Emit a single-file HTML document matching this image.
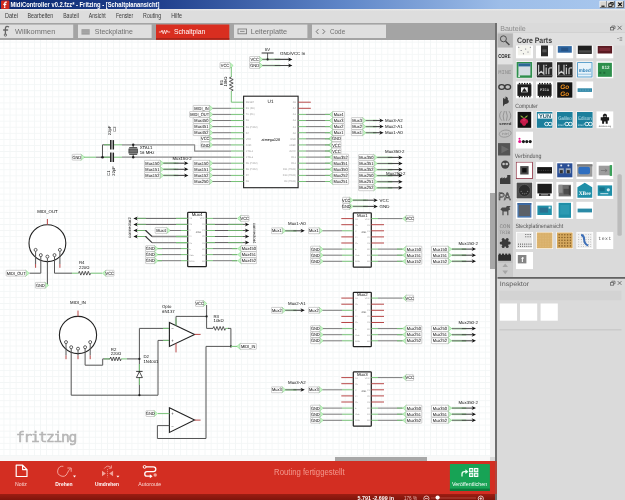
<!DOCTYPE html><html><head><meta charset="utf-8"><title>Fritzing</title><style>
*{margin:0;padding:0;box-sizing:border-box}
html,body{width:625px;height:500px;overflow:hidden;background:#dadada;font-family:"Liberation Sans",sans-serif}
.a{position:absolute}
svg.a{will-change:transform}
#title{left:0;top:0;width:625px;height:8.8px;background:linear-gradient(90deg,#0b2a72 0%,#1f3f8c 25%,#5f86c8 55%,#9dbde8 80%,#a9c8ee 100%)}
#title span{position:absolute;left:10.5px;top:0.5px;font-size:7px;line-height:8px;font-weight:bold;color:#fff;white-space:nowrap;letter-spacing:-0.05px}
#menu{left:0;top:8.8px;width:625px;height:15.2px;background:linear-gradient(180deg,#ececec 0,#e4e4e4 1.2px,#dddddd 2px)}
#menu span{position:absolute;top:3.2px;font-size:6.3px;line-height:8px;color:#333;white-space:nowrap}
#tabs{left:0;top:23.4px;width:495.2px;height:16.3px;background:#a4a4a4}
.tab{position:absolute;top:1.6px;height:13.6px;background:#dfdfdf;font-size:8.3px;line-height:13.6px;color:#777;white-space:nowrap}
.tab span{position:absolute;top:0}
#canvas{left:0;top:39.7px;width:490.4px;height:421.3px;background-color:#fff;
 background-image:linear-gradient(90deg,#f3f6f6 0,#f3f6f6 0.6px,transparent 0.6px),linear-gradient(180deg,#f3f6f6 0,#f3f6f6 0.6px,transparent 0.6px);
 background-size:6.1px 6.08px;background-position:3.5px 1.7px}
#vsb{left:490.4px;top:39.6px;width:4.8px;height:417px;background:#f1f1f1}
#vth{left:490.2px;top:193.3px;width:5px;height:76px;background:#a8a8a8}
#hsb{left:0;top:456.4px;width:490.4px;height:4.6px;background:#f8f8f8}
#hth{left:334.6px;top:456.6px;width:92px;height:4.4px;background:#a8a8a8}
#divider{left:495.2px;top:23px;width:2.3px;height:477px;background:#6f6f6f}
#tool{left:0;top:461px;width:495.2px;height:33px;background:#d32e22}
#status{left:0;top:494px;width:495.2px;height:6px;background:linear-gradient(180deg,#9c1d12,#7e150c)}
#panel{left:497.5px;top:23px;width:127.5px;height:477px;background:#dadada}
.tile{position:absolute;width:17px;height:17.3px;background:#fff;overflow:hidden}
.tile i{position:absolute;display:block}
.sec{position:absolute;left:514.8px;font-size:6.3px;line-height:8px;color:#555;white-space:nowrap}
.bin{position:absolute;left:497.5px;width:15.4px}
</style></head><body>
<div class="a" id="title"></div><div class="a" id="menu"></div><div class="a" id="tabs"></div>
<svg class="a" style="left:0;top:0" width="625" height="40" viewBox="0 0 625 40" font-family="Liberation Sans, sans-serif"><rect x="1" y="0.6" width="8.4" height="8.4" rx="0.8" fill="#cf2a1e"/><path d="M6.9,2.3 Q4.9,1.5 4.7,3.6 V6.6 M3.3,4.3 H6.3" fill="none" stroke="#fff" stroke-width="1.2"/><circle cx="4.7" cy="7.3" r="0.8" fill="#fff"/><text x="10.4" y="7.2" font-size="7" fill="#fff" font-weight="bold" textLength="149.0" lengthAdjust="spacingAndGlyphs" >MidiController v0.2.fzz* - Fritzing - [Schaltplanansicht]</text><rect x="599.8" y="1.1" width="6.8" height="6.5" fill="#d8d5d0"/><path d="M599.8,7.6 V1.1 H606.5999999999999" fill="none" stroke="#fff" stroke-width="0.6"/><path d="M606.5999999999999,1.1 V7.6 H599.8" fill="none" stroke="#404040" stroke-width="0.7"/><rect x="607.2" y="1.1" width="7.2" height="6.5" fill="#d8d5d0"/><path d="M607.2,7.6 V1.1 H614.4000000000001" fill="none" stroke="#fff" stroke-width="0.6"/><path d="M614.4000000000001,1.1 V7.6 H607.2" fill="none" stroke="#404040" stroke-width="0.7"/><rect x="616.4" y="1.1" width="7.2" height="6.5" fill="#d8d5d0"/><path d="M616.4,7.6 V1.1 H623.6" fill="none" stroke="#fff" stroke-width="0.6"/><path d="M623.6,1.1 V7.6 H616.4" fill="none" stroke="#404040" stroke-width="0.7"/><path d="M601.4,6.2 H604.6" stroke="#000" stroke-width="1.1"/><rect x="608.8" y="3.8" width="3.2" height="2.6" fill="none" stroke="#000" stroke-width="0.8"/><path d="M610.2,3.6 V2.5 H613.2 V5 H612.2" fill="none" stroke="#000" stroke-width="0.8"/><path d="M618.2,2.6 L621.8,6.2 M621.8,2.6 L618.2,6.2" stroke="#000" stroke-width="1.1"/><text x="5.1" y="18.2" font-size="6.4" fill="#3a3a3a" font-weight="normal" textLength="12.8" lengthAdjust="spacingAndGlyphs" >Datei</text><text x="27.6" y="18.2" font-size="6.4" fill="#3a3a3a" font-weight="normal" textLength="25.6" lengthAdjust="spacingAndGlyphs" >Bearbeiten</text><text x="63.2" y="18.2" font-size="6.4" fill="#3a3a3a" font-weight="normal" textLength="15.7" lengthAdjust="spacingAndGlyphs" >Bauteil</text><text x="88.8" y="18.2" font-size="6.4" fill="#3a3a3a" font-weight="normal" textLength="16.9" lengthAdjust="spacingAndGlyphs" >Ansicht</text><text x="116" y="18.2" font-size="6.4" fill="#3a3a3a" font-weight="normal" textLength="17.1" lengthAdjust="spacingAndGlyphs" >Fenster</text><text x="143.1" y="18.2" font-size="6.4" fill="#3a3a3a" font-weight="normal" textLength="18.1" lengthAdjust="spacingAndGlyphs" >Routing</text><text x="171.2" y="18.2" font-size="6.4" fill="#3a3a3a" font-weight="normal" textLength="10.8" lengthAdjust="spacingAndGlyphs" >Hilfe</text><rect x="0" y="24.6" width="73.2" height="13.4" fill="#dfdfdf"/><rect x="78" y="24.6" width="73.6" height="13.4" fill="#dfdfdf"/><rect x="156" y="24.5" width="73.3" height="15.2" fill="#d92e20"/><rect x="156" y="38" width="73.3" height="1.7" fill="#a9241a"/><rect x="234" y="24.6" width="73.4" height="13.4" fill="#dfdfdf"/><rect x="312" y="24.6" width="74.0" height="13.4" fill="#dfdfdf"/><path d="M8.6,26.8 C6.6,25.8 5.4,26.8 5.4,28.6 V34 M3.6,30 H7.6" fill="none" stroke="#666" stroke-width="1.3" stroke-linecap="round"/><circle cx="5.4" cy="35" r="1.2" fill="none" stroke="#666" stroke-width="0.9"/><text x="14.9" y="34" font-size="7.3" fill="#707070" font-weight="normal" textLength="40.4" lengthAdjust="spacingAndGlyphs" >Willkommen</text><rect x="81.5" y="29.2" width="8.2" height="5.4" fill="#9a9a9a"/><path d="M81.5,31H89.7M81.5,32.8H89.7" stroke="#bdbdbd" stroke-width="0.5"/><text x="94.8" y="34" font-size="7.3" fill="#707070" font-weight="normal" textLength="38.0" lengthAdjust="spacingAndGlyphs" >Steckplatine</text><path d="M158.9,32 H161.3 L162,30.2 L163.2,33.8 L164.4,30.2 L165.6,33.8 L166.8,30.2 L167.6,32 H170.2" fill="none" stroke="#fff" stroke-width="0.7"/><text x="173.9" y="34" font-size="7.3" fill="#fff" font-weight="normal" textLength="31.4" lengthAdjust="spacingAndGlyphs" >Schaltplan</text><rect x="238" y="29" width="8.6" height="4.8" fill="none" stroke="#777" stroke-width="0.8"/><path d="M240,31.4H244.6" stroke="#777" stroke-width="0.8"/><text x="250.8" y="34" font-size="7.3" fill="#707070" font-weight="normal" textLength="36.4" lengthAdjust="spacingAndGlyphs" >Leiterplatte</text><path d="M318.4,29.2 L316.2,31.6 L318.4,34 M322.6,29.2 L324.8,31.6 L322.6,34" fill="none" stroke="#666" stroke-width="0.9"/><text x="330" y="34" font-size="7.3" fill="#707070" font-weight="normal" textLength="15.2" lengthAdjust="spacingAndGlyphs" >Code</text></svg>
<div class="a" id="canvas"></div><div class="a" id="vsb"></div><div class="a" id="vth"></div><div class="a" id="hsb"></div><div class="a" id="hth"></div>
<div class="a" style="left:16.2px;top:427.6px;font-family:'DejaVu Sans Mono',monospace;font-size:14.6px;line-height:18px;color:#b6b6b6;letter-spacing:-1.3px;white-space:nowrap;font-weight:normal;-webkit-text-stroke:0.55px #b6b6b6;will-change:transform">fritzing</div>
<svg class="a" style="left:0;top:0" width="625" height="500" viewBox="0 0 625 500" font-family="Liberation Sans, sans-serif" text-rendering="geometricPrecision"><defs><clipPath id="cv"><rect x="0" y="39.6" width="490.4" height="417"/></clipPath></defs><g clip-path="url(#cv)" stroke-linecap="butt">
<path d="M259.1,56.2 L262.8,59.4 L259.1,62.6 Z" fill="#c4f4c4" stroke="#8be08b" stroke-width="0.6" stroke-linejoin="round"/>
<rect x="249.6" y="56.5" width="10.0" height="5.8" rx="0.5" fill="#fff" stroke="#a0a0a0" stroke-width="0.5"/>
<text transform="translate(254.6,60.9) scale(0.88,1)" font-size="4.5" text-anchor="middle" fill="#000">VCC</text>
<path d="M259.1,62.3 L262.8,65.5 L259.1,68.7 Z" fill="#c4f4c4" stroke="#8be08b" stroke-width="0.6" stroke-linejoin="round"/>
<rect x="249.6" y="62.6" width="10.0" height="5.8" rx="0.5" fill="#fff" stroke="#a0a0a0" stroke-width="0.5"/>
<text transform="translate(254.6,67.0) scale(0.88,1)" font-size="4.5" text-anchor="middle" fill="#000">GND</text>
<line x1="262.0" y1="59.4" x2="275.0" y2="59.4" stroke="#78c278" stroke-width="1.0" />
<line x1="262.0" y1="65.5" x2="275.0" y2="65.5" stroke="#78c278" stroke-width="1.0" />
<line x1="262.5" y1="59.4" x2="280.4" y2="59.4" stroke="#9be09b" stroke-width="2.0" opacity="0.5"/>
<line x1="262.5" y1="59.4" x2="274.5" y2="59.4" stroke="#747474" stroke-width="1.0" />
<line x1="274.5" y1="59.4" x2="290.4" y2="59.4" stroke="#484848" stroke-width="1.1" />
<path d="M292.4,59.4 L288.0,57.4 L289.4,59.4 L288.0,61.4 Z" fill="#111"/>
<line x1="262.5" y1="65.5" x2="280.4" y2="65.5" stroke="#9be09b" stroke-width="2.0" opacity="0.5"/>
<line x1="262.5" y1="65.5" x2="274.5" y2="65.5" stroke="#747474" stroke-width="1.0" />
<line x1="274.5" y1="65.5" x2="290.4" y2="65.5" stroke="#484848" stroke-width="1.1" />
<path d="M292.4,65.5 L288.0,63.5 L289.4,65.5 L288.0,67.5 Z" fill="#111"/>
<line x1="261.6" y1="53.0" x2="273.6" y2="53.0" stroke="#333" stroke-width="1.0" />
<line x1="267.6" y1="53.0" x2="267.6" y2="59.4" stroke="#333" stroke-width="0.8" />
<circle cx="267.6" cy="59.4" r="1.1" fill="#222"/>
<text x="267.6" y="51.2" font-size="4.3" text-anchor="middle" fill="#111" font-weight="normal" >5V</text>
<text x="280.0" y="54.6" font-size="4.4" text-anchor="start" fill="#111" font-weight="normal" >GND/VCC In</text>
<path d="M229.5,62.3 L233.2,65.5 L229.5,68.7 Z" fill="#c4f4c4" stroke="#8be08b" stroke-width="0.6" stroke-linejoin="round"/>
<rect x="220.0" y="62.6" width="10.0" height="5.8" rx="0.5" fill="#fff" stroke="#a0a0a0" stroke-width="0.5"/>
<text transform="translate(225.0,67.0) scale(0.88,1)" font-size="4.5" text-anchor="middle" fill="#000">VCC</text>
<line x1="231.3" y1="67.0" x2="231.3" y2="77.0" stroke="#78c278" stroke-width="1.0" />
<polyline points="231.3,77.0 229.4,77.9 233.2,79.6 229.4,81.4 233.2,83.1 229.4,84.9 233.2,86.6 229.4,88.4 233.2,90.1 231.3,91.0" stroke="#333" stroke-width="0.8" fill="none" stroke-linejoin="round"/>
<polyline points="231.3,91.0 231.3,102.2 243.6,102.2" stroke="#78c278" stroke-width="1.0" fill="none" stroke-linejoin="round"/>
<text x="222.7" y="82.5" font-size="4.2" text-anchor="middle" fill="#111" font-weight="normal" transform="rotate(-90 222.7 82.5)" >R1</text>
<text x="227.3" y="81.5" font-size="4.2" text-anchor="middle" fill="#111" font-weight="normal" transform="rotate(-90 227.3 81.5)" >10kΩ</text>
<rect x="243.6" y="96.2" width="54.5" height="91.5" fill="#fff" stroke="#222" stroke-width="1.1"/>
<text x="270.5" y="103.0" font-size="4.6" text-anchor="middle" fill="#111" font-weight="normal" >U1</text>
<text x="270.8" y="140.6" font-size="3.7" text-anchor="middle" fill="#000" font-weight="normal" >atmega328</text>
<text x="245.8" y="103.1" font-size="2.5" text-anchor="start" fill="#999" font-weight="normal" >RESET</text>
<text x="295.9" y="103.1" font-size="2.5" text-anchor="end" fill="#999" font-weight="normal" >A5</text>
<text x="245.8" y="109.2" font-size="2.5" text-anchor="start" fill="#999" font-weight="normal" >RX (D0)</text>
<text x="295.9" y="109.2" font-size="2.5" text-anchor="end" fill="#999" font-weight="normal" >A4</text>
<text x="245.8" y="115.3" font-size="2.5" text-anchor="start" fill="#999" font-weight="normal" >TX (D1)</text>
<text x="295.9" y="115.3" font-size="2.5" text-anchor="end" fill="#999" font-weight="normal" >A3</text>
<text x="245.8" y="121.4" font-size="2.5" text-anchor="start" fill="#999" font-weight="normal" >D2</text>
<text x="295.9" y="121.4" font-size="2.5" text-anchor="end" fill="#999" font-weight="normal" >A2</text>
<text x="245.8" y="127.5" font-size="2.5" text-anchor="start" fill="#999" font-weight="normal" >D3 (PWM)</text>
<text x="295.9" y="127.5" font-size="2.5" text-anchor="end" fill="#999" font-weight="normal" >A1</text>
<text x="245.8" y="133.6" font-size="2.5" text-anchor="start" fill="#999" font-weight="normal" >D4</text>
<text x="295.9" y="133.6" font-size="2.5" text-anchor="end" fill="#999" font-weight="normal" >A0</text>
<text x="245.8" y="139.7" font-size="2.5" text-anchor="start" fill="#999" font-weight="normal" >VCC</text>
<text x="295.9" y="139.7" font-size="2.5" text-anchor="end" fill="#999" font-weight="normal" >GND</text>
<text x="245.8" y="145.8" font-size="2.5" text-anchor="start" fill="#999" font-weight="normal" >GND</text>
<text x="295.9" y="145.8" font-size="2.5" text-anchor="end" fill="#999" font-weight="normal" >AREF</text>
<text x="245.8" y="151.9" font-size="2.5" text-anchor="start" fill="#999" font-weight="normal" >XTAL1</text>
<text x="295.9" y="151.9" font-size="2.5" text-anchor="end" fill="#999" font-weight="normal" >AVCC</text>
<text x="245.8" y="158.0" font-size="2.5" text-anchor="start" fill="#999" font-weight="normal" >XTAL2</text>
<text x="295.9" y="158.0" font-size="2.5" text-anchor="end" fill="#999" font-weight="normal" >D13</text>
<text x="245.8" y="164.1" font-size="2.5" text-anchor="start" fill="#999" font-weight="normal" >D5 (PWM)</text>
<text x="295.9" y="164.1" font-size="2.5" text-anchor="end" fill="#999" font-weight="normal" >D12</text>
<text x="245.8" y="170.2" font-size="2.5" text-anchor="start" fill="#999" font-weight="normal" >D6 (PWM)</text>
<text x="295.9" y="170.2" font-size="2.5" text-anchor="end" fill="#999" font-weight="normal" >D11 (PWM)</text>
<text x="245.8" y="176.3" font-size="2.5" text-anchor="start" fill="#999" font-weight="normal" >D7</text>
<text x="295.9" y="176.3" font-size="2.5" text-anchor="end" fill="#999" font-weight="normal" >D10 (PWM)</text>
<text x="245.8" y="182.4" font-size="2.5" text-anchor="start" fill="#999" font-weight="normal" >D8</text>
<text x="295.9" y="182.4" font-size="2.5" text-anchor="end" fill="#999" font-weight="normal" >D9 (PWM)</text>
<path d="M209.1,105.1 L212.8,108.3 L209.1,111.5 Z" fill="#c4f4c4" stroke="#8be08b" stroke-width="0.6" stroke-linejoin="round"/>
<rect x="193.2" y="105.4" width="16.4" height="5.8" rx="0.5" fill="#fff" stroke="#a0a0a0" stroke-width="0.5"/>
<text transform="translate(201.4,109.8) scale(0.88,1)" font-size="4.5" text-anchor="middle" fill="#000">MIDI_IN</text>
<line x1="212.5" y1="108.3" x2="231.0" y2="108.3" stroke="#7a7a7a" stroke-width="1.0" />
<line x1="231.0" y1="108.3" x2="243.6" y2="108.3" stroke="#78c278" stroke-width="1.0" />
<path d="M209.1,111.2 L212.8,114.4 L209.1,117.6 Z" fill="#c4f4c4" stroke="#8be08b" stroke-width="0.6" stroke-linejoin="round"/>
<rect x="189.6" y="111.5" width="20.0" height="5.8" rx="0.5" fill="#fff" stroke="#a0a0a0" stroke-width="0.5"/>
<text transform="translate(199.6,116.0) scale(0.88,1)" font-size="4.5" text-anchor="middle" fill="#000">MIDI_OUT</text>
<line x1="212.5" y1="114.4" x2="231.0" y2="114.4" stroke="#7a7a7a" stroke-width="1.0" />
<line x1="231.0" y1="114.4" x2="243.6" y2="114.4" stroke="#78c278" stroke-width="1.0" />
<path d="M209.1,117.3 L212.8,120.5 L209.1,123.7 Z" fill="#c4f4c4" stroke="#8be08b" stroke-width="0.6" stroke-linejoin="round"/>
<rect x="193.2" y="117.6" width="16.4" height="5.8" rx="0.5" fill="#fff" stroke="#a0a0a0" stroke-width="0.5"/>
<text transform="translate(201.4,122.0) scale(0.88,1)" font-size="4.5" text-anchor="middle" fill="#000">Mux450</text>
<line x1="212.5" y1="120.5" x2="231.0" y2="120.5" stroke="#7a7a7a" stroke-width="1.0" />
<line x1="231.0" y1="120.5" x2="243.6" y2="120.5" stroke="#78c278" stroke-width="1.0" />
<path d="M209.1,123.4 L212.8,126.6 L209.1,129.8 Z" fill="#c4f4c4" stroke="#8be08b" stroke-width="0.6" stroke-linejoin="round"/>
<rect x="193.2" y="123.7" width="16.4" height="5.8" rx="0.5" fill="#fff" stroke="#a0a0a0" stroke-width="0.5"/>
<text transform="translate(201.4,128.2) scale(0.88,1)" font-size="4.5" text-anchor="middle" fill="#000">Mux451</text>
<line x1="212.5" y1="126.6" x2="231.0" y2="126.6" stroke="#7a7a7a" stroke-width="1.0" />
<line x1="231.0" y1="126.6" x2="243.6" y2="126.6" stroke="#78c278" stroke-width="1.0" />
<path d="M209.1,129.5 L212.8,132.7 L209.1,135.9 Z" fill="#c4f4c4" stroke="#8be08b" stroke-width="0.6" stroke-linejoin="round"/>
<rect x="193.2" y="129.8" width="16.4" height="5.8" rx="0.5" fill="#fff" stroke="#a0a0a0" stroke-width="0.5"/>
<text transform="translate(201.4,134.2) scale(0.88,1)" font-size="4.5" text-anchor="middle" fill="#000">Mux452</text>
<line x1="212.5" y1="132.7" x2="231.0" y2="132.7" stroke="#7a7a7a" stroke-width="1.0" />
<line x1="231.0" y1="132.7" x2="243.6" y2="132.7" stroke="#78c278" stroke-width="1.0" />
<path d="M209.1,135.6 L212.8,138.8 L209.1,142.0 Z" fill="#c4f4c4" stroke="#8be08b" stroke-width="0.6" stroke-linejoin="round"/>
<rect x="201.0" y="135.9" width="8.6" height="5.8" rx="0.5" fill="#fff" stroke="#a0a0a0" stroke-width="0.5"/>
<text transform="translate(205.3,140.4) scale(0.88,1)" font-size="4.5" text-anchor="middle" fill="#000">VCC</text>
<line x1="212.5" y1="138.8" x2="231.0" y2="138.8" stroke="#7a7a7a" stroke-width="1.0" />
<line x1="231.0" y1="138.8" x2="243.6" y2="138.8" stroke="#78c278" stroke-width="1.0" />
<path d="M209.1,141.7 L212.8,144.9 L209.1,148.1 Z" fill="#c4f4c4" stroke="#8be08b" stroke-width="0.6" stroke-linejoin="round"/>
<rect x="201.0" y="142.0" width="8.6" height="5.8" rx="0.5" fill="#fff" stroke="#a0a0a0" stroke-width="0.5"/>
<text transform="translate(205.3,146.5) scale(0.88,1)" font-size="4.5" text-anchor="middle" fill="#000">GND</text>
<line x1="212.5" y1="144.9" x2="231.0" y2="144.9" stroke="#7a7a7a" stroke-width="1.0" />
<line x1="231.0" y1="144.9" x2="243.6" y2="144.9" stroke="#78c278" stroke-width="1.0" />
<path d="M209.1,160.0 L212.8,163.2 L209.1,166.4 Z" fill="#c4f4c4" stroke="#8be08b" stroke-width="0.6" stroke-linejoin="round"/>
<rect x="193.2" y="160.3" width="16.4" height="5.8" rx="0.5" fill="#fff" stroke="#a0a0a0" stroke-width="0.5"/>
<text transform="translate(201.4,164.8) scale(0.88,1)" font-size="4.5" text-anchor="middle" fill="#000">Mux150</text>
<line x1="212.5" y1="163.2" x2="231.0" y2="163.2" stroke="#7a7a7a" stroke-width="1.0" />
<line x1="231.0" y1="163.2" x2="243.6" y2="163.2" stroke="#78c278" stroke-width="1.0" />
<path d="M209.1,166.1 L212.8,169.3 L209.1,172.5 Z" fill="#c4f4c4" stroke="#8be08b" stroke-width="0.6" stroke-linejoin="round"/>
<rect x="193.2" y="166.4" width="16.4" height="5.8" rx="0.5" fill="#fff" stroke="#a0a0a0" stroke-width="0.5"/>
<text transform="translate(201.4,170.9) scale(0.88,1)" font-size="4.5" text-anchor="middle" fill="#000">Mux151</text>
<line x1="212.5" y1="169.3" x2="231.0" y2="169.3" stroke="#7a7a7a" stroke-width="1.0" />
<line x1="231.0" y1="169.3" x2="243.6" y2="169.3" stroke="#78c278" stroke-width="1.0" />
<path d="M209.1,172.2 L212.8,175.4 L209.1,178.6 Z" fill="#c4f4c4" stroke="#8be08b" stroke-width="0.6" stroke-linejoin="round"/>
<rect x="193.2" y="172.5" width="16.4" height="5.8" rx="0.5" fill="#fff" stroke="#a0a0a0" stroke-width="0.5"/>
<text transform="translate(201.4,176.9) scale(0.88,1)" font-size="4.5" text-anchor="middle" fill="#000">Mux152</text>
<line x1="212.5" y1="175.4" x2="231.0" y2="175.4" stroke="#7a7a7a" stroke-width="1.0" />
<line x1="231.0" y1="175.4" x2="243.6" y2="175.4" stroke="#78c278" stroke-width="1.0" />
<path d="M209.1,178.3 L212.8,181.5 L209.1,184.7 Z" fill="#c4f4c4" stroke="#8be08b" stroke-width="0.6" stroke-linejoin="round"/>
<rect x="193.2" y="178.6" width="16.4" height="5.8" rx="0.5" fill="#fff" stroke="#a0a0a0" stroke-width="0.5"/>
<text transform="translate(201.4,183.1) scale(0.88,1)" font-size="4.5" text-anchor="middle" fill="#000">Mux250</text>
<line x1="212.5" y1="181.5" x2="231.0" y2="181.5" stroke="#7a7a7a" stroke-width="1.0" />
<line x1="231.0" y1="181.5" x2="243.6" y2="181.5" stroke="#78c278" stroke-width="1.0" />
<line x1="298.1" y1="102.2" x2="310.8" y2="102.2" stroke="#b84848" stroke-width="1.0" />
<line x1="298.1" y1="108.3" x2="310.8" y2="108.3" stroke="#b84848" stroke-width="1.0" />
<path d="M333.1,111.2 L329.4,114.4 L333.1,117.6 Z" fill="#c4f4c4" stroke="#8be08b" stroke-width="0.6" stroke-linejoin="round"/>
<rect x="332.6" y="111.5" width="11.8" height="5.8" rx="0.5" fill="#fff" stroke="#a0a0a0" stroke-width="0.5"/>
<text transform="translate(338.5,116.0) scale(0.88,1)" font-size="4.5" text-anchor="middle" fill="#000">Mux4</text>
<line x1="298.1" y1="114.4" x2="306.0" y2="114.4" stroke="#78c278" stroke-width="1.0" />
<line x1="306.0" y1="114.4" x2="329.5" y2="114.4" stroke="#7a7a7a" stroke-width="1.0" />
<line x1="325.0" y1="114.4" x2="330.0" y2="114.4" stroke="#78c278" stroke-width="1.0" />
<path d="M333.1,117.3 L329.4,120.5 L333.1,123.7 Z" fill="#c4f4c4" stroke="#8be08b" stroke-width="0.6" stroke-linejoin="round"/>
<rect x="332.6" y="117.6" width="11.8" height="5.8" rx="0.5" fill="#fff" stroke="#a0a0a0" stroke-width="0.5"/>
<text transform="translate(338.5,122.0) scale(0.88,1)" font-size="4.5" text-anchor="middle" fill="#000">Mux3</text>
<line x1="298.1" y1="120.5" x2="306.0" y2="120.5" stroke="#78c278" stroke-width="1.0" />
<line x1="306.0" y1="120.5" x2="329.5" y2="120.5" stroke="#7a7a7a" stroke-width="1.0" />
<line x1="325.0" y1="120.5" x2="330.0" y2="120.5" stroke="#78c278" stroke-width="1.0" />
<path d="M333.1,123.4 L329.4,126.6 L333.1,129.8 Z" fill="#c4f4c4" stroke="#8be08b" stroke-width="0.6" stroke-linejoin="round"/>
<rect x="332.6" y="123.7" width="11.8" height="5.8" rx="0.5" fill="#fff" stroke="#a0a0a0" stroke-width="0.5"/>
<text transform="translate(338.5,128.2) scale(0.88,1)" font-size="4.5" text-anchor="middle" fill="#000">Mux2</text>
<line x1="298.1" y1="126.6" x2="306.0" y2="126.6" stroke="#78c278" stroke-width="1.0" />
<line x1="306.0" y1="126.6" x2="329.5" y2="126.6" stroke="#7a7a7a" stroke-width="1.0" />
<line x1="325.0" y1="126.6" x2="330.0" y2="126.6" stroke="#78c278" stroke-width="1.0" />
<path d="M333.1,129.5 L329.4,132.7 L333.1,135.9 Z" fill="#c4f4c4" stroke="#8be08b" stroke-width="0.6" stroke-linejoin="round"/>
<rect x="332.6" y="129.8" width="11.8" height="5.8" rx="0.5" fill="#fff" stroke="#a0a0a0" stroke-width="0.5"/>
<text transform="translate(338.5,134.2) scale(0.88,1)" font-size="4.5" text-anchor="middle" fill="#000">Mux1</text>
<line x1="298.1" y1="132.7" x2="306.0" y2="132.7" stroke="#78c278" stroke-width="1.0" />
<line x1="306.0" y1="132.7" x2="329.5" y2="132.7" stroke="#7a7a7a" stroke-width="1.0" />
<line x1="325.0" y1="132.7" x2="330.0" y2="132.7" stroke="#78c278" stroke-width="1.0" />
<path d="M332.3,135.6 L328.6,138.8 L332.3,142.0 Z" fill="#c4f4c4" stroke="#8be08b" stroke-width="0.6" stroke-linejoin="round"/>
<rect x="331.8" y="135.9" width="9.2" height="5.8" rx="0.5" fill="#fff" stroke="#a0a0a0" stroke-width="0.5"/>
<text transform="translate(336.4,140.4) scale(0.88,1)" font-size="4.5" text-anchor="middle" fill="#000">GND</text>
<line x1="298.1" y1="138.8" x2="306.0" y2="138.8" stroke="#78c278" stroke-width="1.0" />
<line x1="306.0" y1="138.8" x2="329.5" y2="138.8" stroke="#7a7a7a" stroke-width="1.0" />
<line x1="325.0" y1="138.8" x2="330.0" y2="138.8" stroke="#78c278" stroke-width="1.0" />
<path d="M332.3,141.7 L328.6,144.9 L332.3,148.1 Z" fill="#c4f4c4" stroke="#8be08b" stroke-width="0.6" stroke-linejoin="round"/>
<rect x="331.8" y="142.0" width="9.2" height="5.8" rx="0.5" fill="#fff" stroke="#a0a0a0" stroke-width="0.5"/>
<text transform="translate(336.4,146.5) scale(0.88,1)" font-size="4.5" text-anchor="middle" fill="#000">VCC</text>
<line x1="298.1" y1="144.9" x2="306.0" y2="144.9" stroke="#78c278" stroke-width="1.0" />
<line x1="306.0" y1="144.9" x2="329.5" y2="144.9" stroke="#7a7a7a" stroke-width="1.0" />
<line x1="325.0" y1="144.9" x2="330.0" y2="144.9" stroke="#78c278" stroke-width="1.0" />
<path d="M332.3,147.8 L328.6,151.0 L332.3,154.2 Z" fill="#c4f4c4" stroke="#8be08b" stroke-width="0.6" stroke-linejoin="round"/>
<rect x="331.8" y="148.1" width="9.2" height="5.8" rx="0.5" fill="#fff" stroke="#a0a0a0" stroke-width="0.5"/>
<text transform="translate(336.4,152.6) scale(0.88,1)" font-size="4.5" text-anchor="middle" fill="#000">VCC</text>
<line x1="298.1" y1="151.0" x2="306.0" y2="151.0" stroke="#78c278" stroke-width="1.0" />
<line x1="306.0" y1="151.0" x2="329.5" y2="151.0" stroke="#7a7a7a" stroke-width="1.0" />
<line x1="325.0" y1="151.0" x2="330.0" y2="151.0" stroke="#78c278" stroke-width="1.0" />
<path d="M333.1,153.9 L329.4,157.1 L333.1,160.3 Z" fill="#c4f4c4" stroke="#8be08b" stroke-width="0.6" stroke-linejoin="round"/>
<rect x="332.6" y="154.2" width="16.0" height="5.8" rx="0.5" fill="#fff" stroke="#a0a0a0" stroke-width="0.5"/>
<text transform="translate(340.6,158.7) scale(0.88,1)" font-size="4.5" text-anchor="middle" fill="#000">Mux352</text>
<line x1="298.1" y1="157.1" x2="306.0" y2="157.1" stroke="#78c278" stroke-width="1.0" />
<line x1="306.0" y1="157.1" x2="329.5" y2="157.1" stroke="#7a7a7a" stroke-width="1.0" />
<line x1="325.0" y1="157.1" x2="330.0" y2="157.1" stroke="#78c278" stroke-width="1.0" />
<path d="M333.1,160.0 L329.4,163.2 L333.1,166.4 Z" fill="#c4f4c4" stroke="#8be08b" stroke-width="0.6" stroke-linejoin="round"/>
<rect x="332.6" y="160.3" width="16.0" height="5.8" rx="0.5" fill="#fff" stroke="#a0a0a0" stroke-width="0.5"/>
<text transform="translate(340.6,164.8) scale(0.88,1)" font-size="4.5" text-anchor="middle" fill="#000">Mux351</text>
<line x1="298.1" y1="163.2" x2="306.0" y2="163.2" stroke="#78c278" stroke-width="1.0" />
<line x1="306.0" y1="163.2" x2="329.5" y2="163.2" stroke="#7a7a7a" stroke-width="1.0" />
<line x1="325.0" y1="163.2" x2="330.0" y2="163.2" stroke="#78c278" stroke-width="1.0" />
<path d="M333.1,166.1 L329.4,169.3 L333.1,172.5 Z" fill="#c4f4c4" stroke="#8be08b" stroke-width="0.6" stroke-linejoin="round"/>
<rect x="332.6" y="166.4" width="16.0" height="5.8" rx="0.5" fill="#fff" stroke="#a0a0a0" stroke-width="0.5"/>
<text transform="translate(340.6,170.9) scale(0.88,1)" font-size="4.5" text-anchor="middle" fill="#000">Mux350</text>
<line x1="298.1" y1="169.3" x2="306.0" y2="169.3" stroke="#78c278" stroke-width="1.0" />
<line x1="306.0" y1="169.3" x2="329.5" y2="169.3" stroke="#7a7a7a" stroke-width="1.0" />
<line x1="325.0" y1="169.3" x2="330.0" y2="169.3" stroke="#78c278" stroke-width="1.0" />
<path d="M333.1,172.2 L329.4,175.4 L333.1,178.6 Z" fill="#c4f4c4" stroke="#8be08b" stroke-width="0.6" stroke-linejoin="round"/>
<rect x="332.6" y="172.5" width="16.0" height="5.8" rx="0.5" fill="#fff" stroke="#a0a0a0" stroke-width="0.5"/>
<text transform="translate(340.6,176.9) scale(0.88,1)" font-size="4.5" text-anchor="middle" fill="#000">Mux252</text>
<line x1="298.1" y1="175.4" x2="306.0" y2="175.4" stroke="#78c278" stroke-width="1.0" />
<line x1="306.0" y1="175.4" x2="329.5" y2="175.4" stroke="#7a7a7a" stroke-width="1.0" />
<line x1="325.0" y1="175.4" x2="330.0" y2="175.4" stroke="#78c278" stroke-width="1.0" />
<path d="M333.1,178.3 L329.4,181.5 L333.1,184.7 Z" fill="#c4f4c4" stroke="#8be08b" stroke-width="0.6" stroke-linejoin="round"/>
<rect x="332.6" y="178.6" width="16.0" height="5.8" rx="0.5" fill="#fff" stroke="#a0a0a0" stroke-width="0.5"/>
<text transform="translate(340.6,183.1) scale(0.88,1)" font-size="4.5" text-anchor="middle" fill="#000">Mux251</text>
<line x1="298.1" y1="181.5" x2="306.0" y2="181.5" stroke="#78c278" stroke-width="1.0" />
<line x1="306.0" y1="181.5" x2="329.5" y2="181.5" stroke="#7a7a7a" stroke-width="1.0" />
<line x1="325.0" y1="181.5" x2="330.0" y2="181.5" stroke="#78c278" stroke-width="1.0" />
<path d="M362.3,117.3 L366.0,120.5 L362.3,123.7 Z" fill="#c4f4c4" stroke="#8be08b" stroke-width="0.6" stroke-linejoin="round"/>
<rect x="351.4" y="117.6" width="11.4" height="5.8" rx="0.5" fill="#fff" stroke="#a0a0a0" stroke-width="0.5"/>
<text transform="translate(357.1,122.0) scale(0.88,1)" font-size="4.5" text-anchor="middle" fill="#000">Mux3</text>
<line x1="365.5" y1="120.5" x2="376.0" y2="120.5" stroke="#78c278" stroke-width="1.0" />
<line x1="366.0" y1="120.5" x2="376.6" y2="120.5" stroke="#9be09b" stroke-width="2.0" opacity="0.5"/>
<line x1="366.0" y1="120.5" x2="373.0" y2="120.5" stroke="#747474" stroke-width="1.0" />
<line x1="373.0" y1="120.5" x2="381.6" y2="120.5" stroke="#484848" stroke-width="1.1" />
<path d="M383.6,120.5 L379.2,118.5 L380.6,120.5 L379.2,122.5 Z" fill="#111"/>
<text x="385.0" y="122.1" font-size="4.4" text-anchor="start" fill="#111" font-weight="normal" >Mux3-A2</text>
<path d="M362.3,123.4 L366.0,126.6 L362.3,129.8 Z" fill="#c4f4c4" stroke="#8be08b" stroke-width="0.6" stroke-linejoin="round"/>
<rect x="351.4" y="123.7" width="11.4" height="5.8" rx="0.5" fill="#fff" stroke="#a0a0a0" stroke-width="0.5"/>
<text transform="translate(357.1,128.2) scale(0.88,1)" font-size="4.5" text-anchor="middle" fill="#000">Mux2</text>
<line x1="365.5" y1="126.6" x2="376.0" y2="126.6" stroke="#78c278" stroke-width="1.0" />
<line x1="366.0" y1="126.6" x2="376.6" y2="126.6" stroke="#9be09b" stroke-width="2.0" opacity="0.5"/>
<line x1="366.0" y1="126.6" x2="373.0" y2="126.6" stroke="#747474" stroke-width="1.0" />
<line x1="373.0" y1="126.6" x2="381.6" y2="126.6" stroke="#484848" stroke-width="1.1" />
<path d="M383.6,126.6 L379.2,124.6 L380.6,126.6 L379.2,128.6 Z" fill="#111"/>
<text x="385.0" y="128.2" font-size="4.4" text-anchor="start" fill="#111" font-weight="normal" >Mux2-A1</text>
<path d="M362.3,129.5 L366.0,132.7 L362.3,135.9 Z" fill="#c4f4c4" stroke="#8be08b" stroke-width="0.6" stroke-linejoin="round"/>
<rect x="351.4" y="129.8" width="11.4" height="5.8" rx="0.5" fill="#fff" stroke="#a0a0a0" stroke-width="0.5"/>
<text transform="translate(357.1,134.2) scale(0.88,1)" font-size="4.5" text-anchor="middle" fill="#000">Mux1</text>
<line x1="365.5" y1="132.7" x2="376.0" y2="132.7" stroke="#78c278" stroke-width="1.0" />
<line x1="366.0" y1="132.7" x2="376.6" y2="132.7" stroke="#9be09b" stroke-width="2.0" opacity="0.5"/>
<line x1="366.0" y1="132.7" x2="373.0" y2="132.7" stroke="#747474" stroke-width="1.0" />
<line x1="373.0" y1="132.7" x2="381.6" y2="132.7" stroke="#484848" stroke-width="1.1" />
<path d="M383.6,132.7 L379.2,130.7 L380.6,132.7 L379.2,134.7 Z" fill="#111"/>
<text x="385.0" y="134.3" font-size="4.4" text-anchor="start" fill="#111" font-weight="normal" >Mux1-A0</text>
<path d="M373.5,154.2 L377.2,157.4 L373.5,160.6 Z" fill="#c4f4c4" stroke="#8be08b" stroke-width="0.6" stroke-linejoin="round"/>
<rect x="358.6" y="154.5" width="15.4" height="5.8" rx="0.5" fill="#fff" stroke="#a0a0a0" stroke-width="0.5"/>
<text transform="translate(366.3,159.0) scale(0.88,1)" font-size="4.5" text-anchor="middle" fill="#000">Mux350</text>
<line x1="377.0" y1="157.4" x2="392.0" y2="157.4" stroke="#78c278" stroke-width="1.0" />
<line x1="377.4" y1="157.4" x2="392.5" y2="157.4" stroke="#9be09b" stroke-width="2.0" opacity="0.5"/>
<line x1="377.4" y1="157.4" x2="387.5" y2="157.4" stroke="#747474" stroke-width="1.0" />
<line x1="387.5" y1="157.4" x2="400.6" y2="157.4" stroke="#484848" stroke-width="1.1" />
<path d="M402.6,157.4 L398.2,155.4 L399.6,157.4 L398.2,159.4 Z" fill="#111"/>
<path d="M373.5,160.3 L377.2,163.5 L373.5,166.7 Z" fill="#c4f4c4" stroke="#8be08b" stroke-width="0.6" stroke-linejoin="round"/>
<rect x="358.6" y="160.6" width="15.4" height="5.8" rx="0.5" fill="#fff" stroke="#a0a0a0" stroke-width="0.5"/>
<text transform="translate(366.3,165.0) scale(0.88,1)" font-size="4.5" text-anchor="middle" fill="#000">Mux351</text>
<line x1="377.0" y1="163.5" x2="392.0" y2="163.5" stroke="#78c278" stroke-width="1.0" />
<line x1="377.4" y1="163.5" x2="392.5" y2="163.5" stroke="#9be09b" stroke-width="2.0" opacity="0.5"/>
<line x1="377.4" y1="163.5" x2="387.5" y2="163.5" stroke="#747474" stroke-width="1.0" />
<line x1="387.5" y1="163.5" x2="400.6" y2="163.5" stroke="#484848" stroke-width="1.1" />
<path d="M402.6,163.5 L398.2,161.5 L399.6,163.5 L398.2,165.5 Z" fill="#111"/>
<path d="M373.5,166.4 L377.2,169.6 L373.5,172.8 Z" fill="#c4f4c4" stroke="#8be08b" stroke-width="0.6" stroke-linejoin="round"/>
<rect x="358.6" y="166.7" width="15.4" height="5.8" rx="0.5" fill="#fff" stroke="#a0a0a0" stroke-width="0.5"/>
<text transform="translate(366.3,171.1) scale(0.88,1)" font-size="4.5" text-anchor="middle" fill="#000">Mux352</text>
<line x1="377.0" y1="169.6" x2="392.0" y2="169.6" stroke="#78c278" stroke-width="1.0" />
<line x1="377.4" y1="169.6" x2="392.5" y2="169.6" stroke="#9be09b" stroke-width="2.0" opacity="0.5"/>
<line x1="377.4" y1="169.6" x2="387.5" y2="169.6" stroke="#747474" stroke-width="1.0" />
<line x1="387.5" y1="169.6" x2="400.6" y2="169.6" stroke="#484848" stroke-width="1.1" />
<path d="M402.6,169.6 L398.2,167.6 L399.6,169.6 L398.2,171.6 Z" fill="#111"/>
<path d="M373.5,172.4 L377.2,175.6 L373.5,178.8 Z" fill="#c4f4c4" stroke="#8be08b" stroke-width="0.6" stroke-linejoin="round"/>
<rect x="358.6" y="172.7" width="15.4" height="5.8" rx="0.5" fill="#fff" stroke="#a0a0a0" stroke-width="0.5"/>
<text transform="translate(366.3,177.2) scale(0.88,1)" font-size="4.5" text-anchor="middle" fill="#000">Mux250</text>
<line x1="377.0" y1="175.6" x2="392.0" y2="175.6" stroke="#78c278" stroke-width="1.0" />
<line x1="377.4" y1="175.6" x2="392.5" y2="175.6" stroke="#9be09b" stroke-width="2.0" opacity="0.5"/>
<line x1="377.4" y1="175.6" x2="387.5" y2="175.6" stroke="#747474" stroke-width="1.0" />
<line x1="387.5" y1="175.6" x2="400.6" y2="175.6" stroke="#484848" stroke-width="1.1" />
<path d="M402.6,175.6 L398.2,173.6 L399.6,175.6 L398.2,177.6 Z" fill="#111"/>
<path d="M373.5,178.5 L377.2,181.7 L373.5,184.9 Z" fill="#c4f4c4" stroke="#8be08b" stroke-width="0.6" stroke-linejoin="round"/>
<rect x="358.6" y="178.8" width="15.4" height="5.8" rx="0.5" fill="#fff" stroke="#a0a0a0" stroke-width="0.5"/>
<text transform="translate(366.3,183.3) scale(0.88,1)" font-size="4.5" text-anchor="middle" fill="#000">Mux251</text>
<line x1="377.0" y1="181.7" x2="392.0" y2="181.7" stroke="#78c278" stroke-width="1.0" />
<line x1="377.4" y1="181.7" x2="392.5" y2="181.7" stroke="#9be09b" stroke-width="2.0" opacity="0.5"/>
<line x1="377.4" y1="181.7" x2="387.5" y2="181.7" stroke="#747474" stroke-width="1.0" />
<line x1="387.5" y1="181.7" x2="400.6" y2="181.7" stroke="#484848" stroke-width="1.1" />
<path d="M402.6,181.7 L398.2,179.7 L399.6,181.7 L398.2,183.7 Z" fill="#111"/>
<path d="M373.5,184.6 L377.2,187.8 L373.5,191.0 Z" fill="#c4f4c4" stroke="#8be08b" stroke-width="0.6" stroke-linejoin="round"/>
<rect x="358.6" y="184.9" width="15.4" height="5.8" rx="0.5" fill="#fff" stroke="#a0a0a0" stroke-width="0.5"/>
<text transform="translate(366.3,189.4) scale(0.88,1)" font-size="4.5" text-anchor="middle" fill="#000">Mux252</text>
<line x1="377.0" y1="187.8" x2="392.0" y2="187.8" stroke="#78c278" stroke-width="1.0" />
<line x1="377.4" y1="187.8" x2="392.5" y2="187.8" stroke="#9be09b" stroke-width="2.0" opacity="0.5"/>
<line x1="377.4" y1="187.8" x2="387.5" y2="187.8" stroke="#747474" stroke-width="1.0" />
<line x1="387.5" y1="187.8" x2="400.6" y2="187.8" stroke="#484848" stroke-width="1.1" />
<path d="M402.6,187.8 L398.2,185.8 L399.6,187.8 L398.2,189.8 Z" fill="#111"/>
<text x="385.0" y="153.4" font-size="4.4" text-anchor="start" fill="#111" font-weight="normal" >Mux350-2</text>
<text x="386.0" y="174.5" font-size="4.4" text-anchor="start" fill="#111" font-weight="normal" >Mux250-2</text>
<path d="M80.8,154.0 L84.5,157.2 L80.8,160.4 Z" fill="#c4f4c4" stroke="#8be08b" stroke-width="0.6" stroke-linejoin="round"/>
<rect x="72.2" y="154.3" width="9.1" height="5.8" rx="0.5" fill="#fff" stroke="#a0a0a0" stroke-width="0.5"/>
<text transform="translate(76.8,158.8) scale(0.88,1)" font-size="4.5" text-anchor="middle" fill="#000">GND</text>
<line x1="84.0" y1="157.2" x2="96.0" y2="157.2" stroke="#78c278" stroke-width="1.0" />
<line x1="96.0" y1="157.2" x2="102.5" y2="157.2" stroke="#666" stroke-width="1.0" />
<polyline points="102.5,157.2 102.5,144.8 110.5,144.8" stroke="#555" stroke-width="1.0" fill="none" stroke-linejoin="round"/>
<line x1="102.5" y1="157.2" x2="110.5" y2="157.2" stroke="#666" stroke-width="1.0" />
<line x1="104.0" y1="144.8" x2="110.0" y2="144.8" stroke="#78c278" stroke-width="1.0" />
<line x1="104.0" y1="157.2" x2="110.0" y2="157.2" stroke="#78c278" stroke-width="1.0" />
<circle cx="102.5" cy="157.2" r="1.3" fill="#222"/>
<line x1="110.8" y1="140.1" x2="110.8" y2="149.5" stroke="#222" stroke-width="1.5" />
<line x1="113.3" y1="140.1" x2="113.3" y2="149.5" stroke="#222" stroke-width="1.5" />
<line x1="110.8" y1="152.6" x2="110.8" y2="162.0" stroke="#222" stroke-width="1.5" />
<line x1="113.3" y1="152.6" x2="113.3" y2="162.0" stroke="#222" stroke-width="1.5" />
<line x1="114.0" y1="144.8" x2="122.0" y2="144.8" stroke="#78c278" stroke-width="1.0" />
<line x1="114.0" y1="157.2" x2="122.0" y2="157.2" stroke="#78c278" stroke-width="1.0" />
<polyline points="122.0,144.8 194.6,144.8 194.6,151.0 231.0,151.0" stroke="#8c8c8c" stroke-width="1.25" fill="none" stroke-linejoin="round"/>
<line x1="122.0" y1="157.2" x2="231.0" y2="157.2" stroke="#8c8c8c" stroke-width="1.25" />
<line x1="231.0" y1="151.0" x2="243.6" y2="151.0" stroke="#78c278" stroke-width="1.0" />
<line x1="231.0" y1="157.2" x2="243.6" y2="157.2" stroke="#78c278" stroke-width="1.0" />
<line x1="133.2" y1="144.8" x2="133.2" y2="147.4" stroke="#222" stroke-width="0.8" />
<line x1="133.2" y1="154.4" x2="133.2" y2="157.2" stroke="#222" stroke-width="0.8" />
<circle cx="133.2" cy="144.8" r="1.2" fill="#222"/>
<circle cx="133.2" cy="157.2" r="1.2" fill="#222"/>
<line x1="129.2" y1="147.7" x2="137.2" y2="147.7" stroke="#333" stroke-width="1.0" />
<line x1="129.2" y1="154.3" x2="137.2" y2="154.3" stroke="#333" stroke-width="1.0" />
<rect x="128.9" y="148.9" width="8.6" height="4.2" fill="#6e6e6e" stroke="#333" stroke-width="0.7"/>
<text x="139.7" y="149.4" font-size="4.3" text-anchor="start" fill="#111" font-weight="normal" >XTAL1</text>
<text x="139.7" y="154.3" font-size="4.3" text-anchor="start" fill="#111" font-weight="normal" >16 MHz</text>
<text x="111.5" y="135.2" font-size="4.2" text-anchor="start" fill="#111" font-weight="normal" transform="rotate(-90 111.5 135.2)" >22pF</text>
<text x="115.6" y="126.3" font-size="4.2" text-anchor="end" fill="#111" font-weight="normal" transform="rotate(-90 115.6 126.3)" >C2</text>
<text x="110.5" y="175.7" font-size="4.2" text-anchor="start" fill="#111" font-weight="normal" transform="rotate(-90 110.5 175.7)" >C1</text>
<text x="115.3" y="175.7" font-size="4.2" text-anchor="start" fill="#111" font-weight="normal" transform="rotate(-90 115.3 175.7)" >22pF</text>
<path d="M159.8,160.0 L163.5,163.2 L159.8,166.4 Z" fill="#c4f4c4" stroke="#8be08b" stroke-width="0.6" stroke-linejoin="round"/>
<rect x="144.5" y="160.3" width="15.8" height="5.8" rx="0.5" fill="#fff" stroke="#a0a0a0" stroke-width="0.5"/>
<text transform="translate(152.4,164.8) scale(0.88,1)" font-size="4.5" text-anchor="middle" fill="#000">Mux150</text>
<line x1="163.0" y1="163.2" x2="176.0" y2="163.2" stroke="#78c278" stroke-width="1.0" />
<line x1="163.5" y1="163.2" x2="178.4" y2="163.2" stroke="#9be09b" stroke-width="2.0" opacity="0.5"/>
<line x1="163.5" y1="163.2" x2="173.5" y2="163.2" stroke="#747474" stroke-width="1.0" />
<line x1="173.5" y1="163.2" x2="186.4" y2="163.2" stroke="#484848" stroke-width="1.1" />
<path d="M188.4,163.2 L184.0,161.2 L185.4,163.2 L184.0,165.2 Z" fill="#111"/>
<path d="M159.8,166.1 L163.5,169.3 L159.8,172.5 Z" fill="#c4f4c4" stroke="#8be08b" stroke-width="0.6" stroke-linejoin="round"/>
<rect x="144.5" y="166.4" width="15.8" height="5.8" rx="0.5" fill="#fff" stroke="#a0a0a0" stroke-width="0.5"/>
<text transform="translate(152.4,170.9) scale(0.88,1)" font-size="4.5" text-anchor="middle" fill="#000">Mux151</text>
<line x1="163.0" y1="169.3" x2="176.0" y2="169.3" stroke="#78c278" stroke-width="1.0" />
<line x1="163.5" y1="169.3" x2="178.4" y2="169.3" stroke="#9be09b" stroke-width="2.0" opacity="0.5"/>
<line x1="163.5" y1="169.3" x2="173.5" y2="169.3" stroke="#747474" stroke-width="1.0" />
<line x1="173.5" y1="169.3" x2="186.4" y2="169.3" stroke="#484848" stroke-width="1.1" />
<path d="M188.4,169.3 L184.0,167.3 L185.4,169.3 L184.0,171.3 Z" fill="#111"/>
<path d="M159.8,172.2 L163.5,175.4 L159.8,178.6 Z" fill="#c4f4c4" stroke="#8be08b" stroke-width="0.6" stroke-linejoin="round"/>
<rect x="144.5" y="172.5" width="15.8" height="5.8" rx="0.5" fill="#fff" stroke="#a0a0a0" stroke-width="0.5"/>
<text transform="translate(152.4,176.9) scale(0.88,1)" font-size="4.5" text-anchor="middle" fill="#000">Mux152</text>
<line x1="163.0" y1="175.4" x2="176.0" y2="175.4" stroke="#78c278" stroke-width="1.0" />
<line x1="163.5" y1="175.4" x2="178.4" y2="175.4" stroke="#9be09b" stroke-width="2.0" opacity="0.5"/>
<line x1="163.5" y1="175.4" x2="173.5" y2="175.4" stroke="#747474" stroke-width="1.0" />
<line x1="173.5" y1="175.4" x2="186.4" y2="175.4" stroke="#484848" stroke-width="1.1" />
<path d="M188.4,175.4 L184.0,173.4 L185.4,175.4 L184.0,177.4 Z" fill="#111"/>
<text x="172.5" y="160.2" font-size="4.3" text-anchor="start" fill="#111" font-weight="normal" >Mux150-2</text>
<circle cx="47.4" cy="243.2" r="18.4" fill="#fff" stroke="#222" stroke-width="1.1"/>
<line x1="47.4" y1="219.0" x2="47.4" y2="224.8" stroke="#b84848" stroke-width="1.0" />
<text x="47.4" y="212.6" font-size="4.3" text-anchor="middle" fill="#111" font-weight="normal" >MIDI_OUT</text>
<circle cx="35.6" cy="249.9" r="1.5" fill="#fff" stroke="#222" stroke-width="0.7"/>
<circle cx="40.8" cy="255.1" r="1.5" fill="#fff" stroke="#222" stroke-width="0.7"/>
<circle cx="47.4" cy="256.6" r="1.5" fill="#fff" stroke="#222" stroke-width="0.7"/>
<circle cx="54.5" cy="255.1" r="1.5" fill="#fff" stroke="#222" stroke-width="0.7"/>
<circle cx="59.9" cy="249.9" r="1.5" fill="#fff" stroke="#222" stroke-width="0.7"/>
<line x1="35.6" y1="251.5" x2="35.6" y2="264.0" stroke="#555" stroke-width="1.0" />
<line x1="35.6" y1="264.0" x2="35.6" y2="267.8" stroke="#b84848" stroke-width="1.0" />
<line x1="59.9" y1="251.5" x2="59.9" y2="264.0" stroke="#555" stroke-width="1.0" />
<line x1="59.9" y1="264.0" x2="59.9" y2="267.8" stroke="#b84848" stroke-width="1.0" />
<polyline points="40.8,256.7 40.8,273.2 29.5,273.2" stroke="#555" stroke-width="1.0" fill="none" stroke-linejoin="round"/>
<line x1="47.4" y1="258.2" x2="47.4" y2="285.3" stroke="#555" stroke-width="1.0" />
<polyline points="54.5,256.7 54.5,273.2 72.0,273.2" stroke="#555" stroke-width="1.0" fill="none" stroke-linejoin="round"/>
<path d="M25.5,270.0 L29.2,273.2 L25.5,276.4 Z" fill="#c4f4c4" stroke="#8be08b" stroke-width="0.6" stroke-linejoin="round"/>
<rect x="6.2" y="270.3" width="19.8" height="5.8" rx="0.5" fill="#fff" stroke="#a0a0a0" stroke-width="0.5"/>
<text transform="translate(16.1,274.8) scale(0.88,1)" font-size="4.5" text-anchor="middle" fill="#000">MIDI_OUT</text>
<path d="M44.8,282.1 L48.5,285.3 L44.8,288.5 Z" fill="#c4f4c4" stroke="#8be08b" stroke-width="0.6" stroke-linejoin="round"/>
<rect x="35.4" y="282.4" width="9.9" height="5.8" rx="0.5" fill="#fff" stroke="#a0a0a0" stroke-width="0.5"/>
<text transform="translate(40.3,286.9) scale(0.88,1)" font-size="4.5" text-anchor="middle" fill="#000">GND</text>
<line x1="71.8" y1="273.2" x2="78.6" y2="273.2" stroke="#78c278" stroke-width="1.0" />
<polyline points="78.6,273.2 79.3,271.3 80.8,275.1 82.3,271.3 83.8,275.1 85.3,271.3 86.8,275.1 88.3,271.3 89.8,275.1 90.6,273.2" stroke="#333" stroke-width="0.8" fill="none" stroke-linejoin="round"/>
<line x1="90.6" y1="273.2" x2="102.0" y2="273.2" stroke="#78c278" stroke-width="1.0" />
<path d="M106.1,270.0 L102.4,273.2 L106.1,276.4 Z" fill="#c4f4c4" stroke="#8be08b" stroke-width="0.6" stroke-linejoin="round"/>
<rect x="105.6" y="270.3" width="8.4" height="5.8" rx="0.5" fill="#fff" stroke="#a0a0a0" stroke-width="0.5"/>
<text transform="translate(109.8,274.8) scale(0.88,1)" font-size="4.5" text-anchor="middle" fill="#000">VCC</text>
<text x="79.0" y="264.4" font-size="4.3" text-anchor="start" fill="#111" font-weight="normal" >R4</text>
<text x="79.0" y="269.2" font-size="4.3" text-anchor="start" fill="#111" font-weight="normal" >220Ω</text>
<circle cx="78" cy="335" r="18.6" fill="#fff" stroke="#222" stroke-width="1.1"/>
<line x1="78.0" y1="310.6" x2="78.0" y2="316.4" stroke="#b84848" stroke-width="1.0" />
<text x="78.0" y="304.3" font-size="4.3" text-anchor="middle" fill="#111" font-weight="normal" >MIDI_IN</text>
<circle cx="66" cy="342.1" r="1.5" fill="#fff" stroke="#222" stroke-width="0.7"/>
<circle cx="71.2" cy="347.2" r="1.5" fill="#fff" stroke="#222" stroke-width="0.7"/>
<circle cx="78" cy="348.7" r="1.5" fill="#fff" stroke="#222" stroke-width="0.7"/>
<circle cx="85.1" cy="347.2" r="1.5" fill="#fff" stroke="#222" stroke-width="0.7"/>
<circle cx="90.2" cy="342.1" r="1.5" fill="#fff" stroke="#222" stroke-width="0.7"/>
<line x1="66.0" y1="343.7" x2="66.0" y2="355.5" stroke="#555" stroke-width="1.0" />
<line x1="66.0" y1="355.5" x2="66.0" y2="359.2" stroke="#b84848" stroke-width="1.0" />
<line x1="78.0" y1="350.3" x2="78.0" y2="355.5" stroke="#555" stroke-width="1.0" />
<line x1="78.0" y1="355.5" x2="78.0" y2="359.2" stroke="#b84848" stroke-width="1.0" />
<line x1="90.2" y1="343.7" x2="90.2" y2="355.5" stroke="#555" stroke-width="1.0" />
<line x1="90.2" y1="355.5" x2="90.2" y2="359.2" stroke="#b84848" stroke-width="1.0" />
<polyline points="71.2,348.8 71.2,395.2 158.0,395.2 158.0,340.4 169.4,340.4" stroke="#555" stroke-width="1.0" fill="none" stroke-linejoin="round"/>
<polyline points="85.1,348.8 85.1,365.2 102.7,365.2 102.7,358.9 110.0,358.9" stroke="#555" stroke-width="1.0" fill="none" stroke-linejoin="round"/>
<line x1="104.0" y1="358.9" x2="110.0" y2="358.9" stroke="#78c278" stroke-width="1.0" />
<polyline points="110.0,358.9 110.7,357.0 112.1,360.8 113.5,357.0 114.9,360.8 116.3,357.0 117.7,360.8 119.1,357.0 120.5,360.8 121.2,358.9" stroke="#333" stroke-width="0.8" fill="none" stroke-linejoin="round"/>
<line x1="121.2" y1="358.9" x2="127.0" y2="358.9" stroke="#78c278" stroke-width="1.0" />
<line x1="127.0" y1="358.9" x2="139.4" y2="358.9" stroke="#555" stroke-width="1.0" />
<polyline points="139.4,358.9 139.4,328.4 169.4,328.4" stroke="#555" stroke-width="1.0" fill="none" stroke-linejoin="round"/>
<line x1="163.0" y1="328.4" x2="169.4" y2="328.4" stroke="#78c278" stroke-width="1.0" />
<line x1="163.0" y1="340.4" x2="169.4" y2="340.4" stroke="#78c278" stroke-width="1.0" />
<line x1="139.4" y1="358.9" x2="139.4" y2="395.2" stroke="#555" stroke-width="1.0" />
<line x1="139.4" y1="364.0" x2="139.4" y2="371.0" stroke="#78c278" stroke-width="1.0" />
<line x1="139.4" y1="378.0" x2="139.4" y2="385.0" stroke="#78c278" stroke-width="1.0" />
<circle cx="139.4" cy="358.9" r="1.1" fill="#222"/>
<circle cx="139.4" cy="395.2" r="1.1" fill="#222"/>
<path d="M139.4,371.6 L136.4,377.6 L142.4,377.6 Z" fill="#fff" stroke="#222" stroke-width="0.8"/>
<line x1="136.2" y1="371.4" x2="142.6" y2="371.4" stroke="#222" stroke-width="0.9" />
<text x="110.8" y="350.6" font-size="4.3" text-anchor="start" fill="#111" font-weight="normal" >R2</text>
<text x="110.8" y="355.2" font-size="4.3" text-anchor="start" fill="#111" font-weight="normal" >220Ω</text>
<text x="143.4" y="358.4" font-size="4.3" text-anchor="start" fill="#111" font-weight="normal" >D2</text>
<text x="143.4" y="363.0" font-size="4.3" text-anchor="start" fill="#111" font-weight="normal" >1N4001</text>
<text x="162.0" y="308.4" font-size="4.3" text-anchor="start" fill="#111" font-weight="normal" >Opto</text>
<text x="162.0" y="313.0" font-size="4.3" text-anchor="start" fill="#111" font-weight="normal" >6N137</text>
<path d="M169.4,322.4 L194.6,334.4 L169.4,346.4 Z" fill="#fff" stroke="#222" stroke-width="1.1"/>
<line x1="194.6" y1="334.4" x2="200.6" y2="334.4" stroke="#b84848" stroke-width="1.0" />
<text x="172.4" y="329.8" font-size="4.3" text-anchor="middle" fill="#111" font-weight="normal" >−</text>
<text x="172.4" y="341.8" font-size="4.3" text-anchor="middle" fill="#111" font-weight="normal" >+</text>
<path d="M169.4,407.8 L194.6,420.1 L169.4,432.4 Z" fill="#fff" stroke="#222" stroke-width="1.1"/>
<line x1="194.6" y1="420.1" x2="200.6" y2="420.1" stroke="#b84848" stroke-width="1.0" />
<text x="172.4" y="415.2" font-size="4.3" text-anchor="middle" fill="#111" font-weight="normal" >+</text>
<text x="172.4" y="427.8" font-size="4.3" text-anchor="middle" fill="#111" font-weight="normal" >−</text>
<polyline points="176.0,325.4 176.0,316.4 206.6,316.4" stroke="#555" stroke-width="1.0" fill="none" stroke-linejoin="round"/>
<line x1="176.0" y1="325.4" x2="176.0" y2="318.5" stroke="#78c278" stroke-width="1.0" />
<line x1="176.0" y1="343.4" x2="176.0" y2="352.4" stroke="#b84848" stroke-width="1.0" />
<path d="M203.1,300.3 L206.8,303.5 L203.1,306.7 Z" fill="#c4f4c4" stroke="#8be08b" stroke-width="0.6" stroke-linejoin="round"/>
<rect x="195.5" y="300.6" width="8.1" height="5.8" rx="0.5" fill="#fff" stroke="#a0a0a0" stroke-width="0.5"/>
<text transform="translate(199.6,305.1) scale(0.88,1)" font-size="4.5" text-anchor="middle" fill="#000">VCC</text>
<polyline points="206.6,305.0 206.6,328.4 213.0,328.4" stroke="#555" stroke-width="1.0" fill="none" stroke-linejoin="round"/>
<circle cx="206.6" cy="316.4" r="1.1" fill="#222"/>
<polyline points="213.0,328.4 213.8,326.5 215.4,330.3 216.9,326.5 218.5,330.3 220.1,326.5 221.7,330.3 223.2,326.5 224.8,330.3 225.6,328.4" stroke="#333" stroke-width="0.8" fill="none" stroke-linejoin="round"/>
<line x1="225.6" y1="328.4" x2="229.0" y2="328.4" stroke="#78c278" stroke-width="1.0" />
<polyline points="228.0,328.4 230.9,328.4 230.9,346.4" stroke="#555" stroke-width="1.0" fill="none" stroke-linejoin="round"/>
<circle cx="230.9" cy="346.4" r="1.1" fill="#222"/>
<line x1="230.9" y1="346.4" x2="237.0" y2="346.4" stroke="#78c278" stroke-width="1.0" />
<path d="M240.5,343.2 L236.8,346.4 L240.5,349.6 Z" fill="#c4f4c4" stroke="#8be08b" stroke-width="0.6" stroke-linejoin="round"/>
<rect x="240.0" y="343.5" width="16.4" height="5.8" rx="0.5" fill="#fff" stroke="#a0a0a0" stroke-width="0.5"/>
<text transform="translate(248.2,347.9) scale(0.88,1)" font-size="4.5" text-anchor="middle" fill="#000">MIDI_IN</text>
<text x="213.5" y="317.6" font-size="4.3" text-anchor="start" fill="#111" font-weight="normal" >R3</text>
<text x="213.5" y="322.2" font-size="4.3" text-anchor="start" fill="#111" font-weight="normal" >10kΩ</text>
<polyline points="230.9,346.4 206.0,346.4 206.0,438.5 157.4,438.5 157.4,425.6 169.4,425.6" stroke="#555" stroke-width="1.0" fill="none" stroke-linejoin="round"/>
<path d="M153.9,410.4 L157.6,413.6 L153.9,416.8 Z" fill="#c4f4c4" stroke="#8be08b" stroke-width="0.6" stroke-linejoin="round"/>
<rect x="146.0" y="410.7" width="8.4" height="5.8" rx="0.5" fill="#fff" stroke="#a0a0a0" stroke-width="0.5"/>
<text transform="translate(150.2,415.2) scale(0.88,1)" font-size="4.5" text-anchor="middle" fill="#000">GND</text>
<line x1="158.0" y1="413.6" x2="169.4" y2="413.6" stroke="#78c278" stroke-width="1.0" />
<rect x="187.7" y="212.4" width="18.6" height="54.2" rx="0.7" fill="#fff" stroke="#222" stroke-width="1.25"/>
<text x="197.0" y="216.3" font-size="4.4" text-anchor="middle" fill="#111" font-weight="normal" >Mux4</text>
<text x="198.5" y="232.9" font-size="2.4" text-anchor="middle" fill="#666" font-weight="normal" >4051</text>
<text x="189.3" y="219.3" font-size="2.3" text-anchor="start" fill="#999" font-weight="normal" >X4</text>
<text x="204.7" y="219.3" font-size="2.3" text-anchor="end" fill="#999" font-weight="normal" >VCC</text>
<text x="189.3" y="225.3" font-size="2.3" text-anchor="start" fill="#999" font-weight="normal" >X6</text>
<text x="204.7" y="225.3" font-size="2.3" text-anchor="end" fill="#999" font-weight="normal" >X2</text>
<text x="189.3" y="231.4" font-size="2.3" text-anchor="start" fill="#999" font-weight="normal" >X</text>
<text x="204.7" y="231.4" font-size="2.3" text-anchor="end" fill="#999" font-weight="normal" >X1</text>
<text x="189.3" y="237.4" font-size="2.3" text-anchor="start" fill="#999" font-weight="normal" >X7</text>
<text x="204.7" y="237.4" font-size="2.3" text-anchor="end" fill="#999" font-weight="normal" >X0</text>
<text x="189.3" y="243.5" font-size="2.3" text-anchor="start" fill="#999" font-weight="normal" >X5</text>
<text x="204.7" y="243.5" font-size="2.3" text-anchor="end" fill="#999" font-weight="normal" >X3</text>
<text x="189.3" y="249.5" font-size="2.3" text-anchor="start" fill="#999" font-weight="normal" >E</text>
<text x="204.7" y="249.5" font-size="2.3" text-anchor="end" fill="#999" font-weight="normal" >S0</text>
<text x="189.3" y="255.5" font-size="2.3" text-anchor="start" fill="#999" font-weight="normal" >VEE</text>
<text x="204.7" y="255.5" font-size="2.3" text-anchor="end" fill="#999" font-weight="normal" >S1</text>
<text x="189.3" y="261.6" font-size="2.3" text-anchor="start" fill="#999" font-weight="normal" >GND</text>
<text x="204.7" y="261.6" font-size="2.3" text-anchor="end" fill="#999" font-weight="normal" >S2</text>
<line x1="187.7" y1="218.4" x2="135.4" y2="218.4" stroke="#5e5e5e" stroke-width="1.0" />
<path d="M133.4,218.4 L137.8,216.4 L136.4,218.4 L137.8,220.4 Z" fill="#111"/>
<line x1="176.0" y1="218.4" x2="187.7" y2="218.4" stroke="#78c278" stroke-width="1.0" />
<line x1="137.0" y1="218.4" x2="146.0" y2="218.4" stroke="#6fae6f" stroke-width="1.0" />
<line x1="187.7" y1="224.4" x2="135.4" y2="224.4" stroke="#5e5e5e" stroke-width="1.0" />
<path d="M133.4,224.4 L137.8,222.4 L136.4,224.4 L137.8,226.4 Z" fill="#111"/>
<line x1="176.0" y1="224.4" x2="187.7" y2="224.4" stroke="#78c278" stroke-width="1.0" />
<line x1="137.0" y1="224.4" x2="146.0" y2="224.4" stroke="#6fae6f" stroke-width="1.0" />
<path d="M166.5,227.3 L170.2,230.5 L166.5,233.7 Z" fill="#c4f4c4" stroke="#8be08b" stroke-width="0.6" stroke-linejoin="round"/>
<rect x="155.2" y="227.6" width="11.8" height="5.8" rx="0.5" fill="#fff" stroke="#a0a0a0" stroke-width="0.5"/>
<text transform="translate(161.1,232.0) scale(0.88,1)" font-size="4.5" text-anchor="middle" fill="#000">Mux4</text>
<line x1="170.0" y1="230.5" x2="181.0" y2="230.5" stroke="#7a7a7a" stroke-width="1.0" />
<line x1="181.0" y1="230.5" x2="187.7" y2="230.5" stroke="#78c278" stroke-width="1.0" />
<line x1="187.7" y1="236.5" x2="152.0" y2="236.5" stroke="#8a8a8a" stroke-width="1.3" />
<line x1="152.0" y1="236.5" x2="145.6" y2="230.5" stroke="#333" stroke-width="1.1" />
<line x1="146.3" y1="230.5" x2="135.4" y2="230.5" stroke="#4a4a4a" stroke-width="1.0" />
<path d="M133.4,230.5 L137.8,228.5 L136.4,230.5 L137.8,232.5 Z" fill="#111"/>
<line x1="176.0" y1="236.5" x2="187.7" y2="236.5" stroke="#78c278" stroke-width="1.2" />
<line x1="137.0" y1="230.5" x2="145.0" y2="230.5" stroke="#6fae6f" stroke-width="1.0" />
<line x1="187.7" y1="242.6" x2="152.0" y2="242.6" stroke="#8a8a8a" stroke-width="1.3" />
<line x1="152.0" y1="242.6" x2="145.6" y2="236.5" stroke="#333" stroke-width="1.1" />
<line x1="146.3" y1="236.5" x2="135.4" y2="236.5" stroke="#4a4a4a" stroke-width="1.0" />
<path d="M133.4,236.5 L137.8,234.5 L136.4,236.5 L137.8,238.5 Z" fill="#111"/>
<line x1="176.0" y1="242.6" x2="187.7" y2="242.6" stroke="#78c278" stroke-width="1.2" />
<line x1="137.0" y1="236.5" x2="145.0" y2="236.5" stroke="#6fae6f" stroke-width="1.0" />
<path d="M154.3,245.4 L158.0,248.6 L154.3,251.8 Z" fill="#c4f4c4" stroke="#8be08b" stroke-width="0.6" stroke-linejoin="round"/>
<rect x="145.6" y="245.7" width="9.2" height="5.8" rx="0.5" fill="#fff" stroke="#a0a0a0" stroke-width="0.5"/>
<text transform="translate(150.2,250.2) scale(0.88,1)" font-size="4.5" text-anchor="middle" fill="#000">GND</text>
<line x1="158.0" y1="248.6" x2="181.0" y2="248.6" stroke="#7a7a7a" stroke-width="1.0" />
<line x1="181.0" y1="248.6" x2="187.7" y2="248.6" stroke="#78c278" stroke-width="1.0" />
<line x1="157.5" y1="248.6" x2="162.0" y2="248.6" stroke="#78c278" stroke-width="1.0" />
<path d="M154.3,251.4 L158.0,254.6 L154.3,257.8 Z" fill="#c4f4c4" stroke="#8be08b" stroke-width="0.6" stroke-linejoin="round"/>
<rect x="145.6" y="251.7" width="9.2" height="5.8" rx="0.5" fill="#fff" stroke="#a0a0a0" stroke-width="0.5"/>
<text transform="translate(150.2,256.2) scale(0.88,1)" font-size="4.5" text-anchor="middle" fill="#000">GND</text>
<line x1="158.0" y1="254.6" x2="181.0" y2="254.6" stroke="#7a7a7a" stroke-width="1.0" />
<line x1="181.0" y1="254.6" x2="187.7" y2="254.6" stroke="#78c278" stroke-width="1.0" />
<line x1="157.5" y1="254.6" x2="162.0" y2="254.6" stroke="#78c278" stroke-width="1.0" />
<path d="M154.3,257.5 L158.0,260.7 L154.3,263.9 Z" fill="#c4f4c4" stroke="#8be08b" stroke-width="0.6" stroke-linejoin="round"/>
<rect x="145.6" y="257.8" width="9.2" height="5.8" rx="0.5" fill="#fff" stroke="#a0a0a0" stroke-width="0.5"/>
<text transform="translate(150.2,262.2) scale(0.88,1)" font-size="4.5" text-anchor="middle" fill="#000">GND</text>
<line x1="158.0" y1="260.7" x2="181.0" y2="260.7" stroke="#7a7a7a" stroke-width="1.0" />
<line x1="181.0" y1="260.7" x2="187.7" y2="260.7" stroke="#78c278" stroke-width="1.0" />
<line x1="157.5" y1="260.7" x2="162.0" y2="260.7" stroke="#78c278" stroke-width="1.0" />
<text x="130.8" y="227.6" font-size="4.2" text-anchor="middle" fill="#111" font-weight="normal" transform="rotate(-90 130.8 227.6)" >connector2</text>
<path d="M241.1,215.2 L237.4,218.4 L241.1,221.6 Z" fill="#c4f4c4" stroke="#8be08b" stroke-width="0.6" stroke-linejoin="round"/>
<rect x="240.6" y="215.5" width="8.4" height="5.8" rx="0.5" fill="#fff" stroke="#a0a0a0" stroke-width="0.5"/>
<text transform="translate(244.8,220.0) scale(0.88,1)" font-size="4.5" text-anchor="middle" fill="#000">VCC</text>
<line x1="206.3" y1="218.4" x2="213.0" y2="218.4" stroke="#78c278" stroke-width="1.0" />
<line x1="213.0" y1="218.4" x2="237.0" y2="218.4" stroke="#7a7a7a" stroke-width="1.0" />
<line x1="206.3" y1="224.4" x2="247.2" y2="224.4" stroke="#5e5e5e" stroke-width="1.0" />
<path d="M249.2,224.4 L244.8,222.4 L246.2,224.4 L244.8,226.4 Z" fill="#111"/>
<line x1="206.3" y1="224.4" x2="215.0" y2="224.4" stroke="#78c278" stroke-width="1.0" />
<line x1="228.0" y1="224.4" x2="243.0" y2="224.4" stroke="#6fae6f" stroke-width="1.0" />
<line x1="206.3" y1="230.5" x2="247.2" y2="230.5" stroke="#5e5e5e" stroke-width="1.0" />
<path d="M249.2,230.5 L244.8,228.5 L246.2,230.5 L244.8,232.5 Z" fill="#111"/>
<line x1="206.3" y1="230.5" x2="215.0" y2="230.5" stroke="#78c278" stroke-width="1.0" />
<line x1="228.0" y1="230.5" x2="243.0" y2="230.5" stroke="#6fae6f" stroke-width="1.0" />
<line x1="206.3" y1="236.5" x2="247.2" y2="236.5" stroke="#5e5e5e" stroke-width="1.0" />
<path d="M249.2,236.5 L244.8,234.5 L246.2,236.5 L244.8,238.5 Z" fill="#111"/>
<line x1="206.3" y1="236.5" x2="215.0" y2="236.5" stroke="#78c278" stroke-width="1.0" />
<line x1="228.0" y1="236.5" x2="243.0" y2="236.5" stroke="#6fae6f" stroke-width="1.0" />
<line x1="206.3" y1="242.6" x2="247.2" y2="242.6" stroke="#5e5e5e" stroke-width="1.0" />
<path d="M249.2,242.6 L244.8,240.6 L246.2,242.6 L244.8,244.6 Z" fill="#111"/>
<line x1="206.3" y1="242.6" x2="215.0" y2="242.6" stroke="#78c278" stroke-width="1.0" />
<line x1="228.0" y1="242.6" x2="243.0" y2="242.6" stroke="#6fae6f" stroke-width="1.0" />
<path d="M241.5,245.4 L237.8,248.6 L241.5,251.8 Z" fill="#c4f4c4" stroke="#8be08b" stroke-width="0.6" stroke-linejoin="round"/>
<rect x="241.0" y="245.7" width="15.7" height="5.8" rx="0.5" fill="#fff" stroke="#a0a0a0" stroke-width="0.5"/>
<text transform="translate(248.8,250.2) scale(0.88,1)" font-size="4.5" text-anchor="middle" fill="#000">Mux450</text>
<line x1="206.3" y1="248.6" x2="213.0" y2="248.6" stroke="#78c278" stroke-width="1.0" />
<line x1="213.0" y1="248.6" x2="237.0" y2="248.6" stroke="#7a7a7a" stroke-width="1.0" />
<line x1="232.0" y1="248.6" x2="237.5" y2="248.6" stroke="#78c278" stroke-width="1.0" />
<path d="M241.5,251.4 L237.8,254.6 L241.5,257.8 Z" fill="#c4f4c4" stroke="#8be08b" stroke-width="0.6" stroke-linejoin="round"/>
<rect x="241.0" y="251.7" width="15.7" height="5.8" rx="0.5" fill="#fff" stroke="#a0a0a0" stroke-width="0.5"/>
<text transform="translate(248.8,256.2) scale(0.88,1)" font-size="4.5" text-anchor="middle" fill="#000">Mux451</text>
<line x1="206.3" y1="254.6" x2="213.0" y2="254.6" stroke="#78c278" stroke-width="1.0" />
<line x1="213.0" y1="254.6" x2="237.0" y2="254.6" stroke="#7a7a7a" stroke-width="1.0" />
<line x1="232.0" y1="254.6" x2="237.5" y2="254.6" stroke="#78c278" stroke-width="1.0" />
<path d="M241.5,257.5 L237.8,260.7 L241.5,263.9 Z" fill="#c4f4c4" stroke="#8be08b" stroke-width="0.6" stroke-linejoin="round"/>
<rect x="241.0" y="257.8" width="15.7" height="5.8" rx="0.5" fill="#fff" stroke="#a0a0a0" stroke-width="0.5"/>
<text transform="translate(248.8,262.2) scale(0.88,1)" font-size="4.5" text-anchor="middle" fill="#000">Mux452</text>
<line x1="206.3" y1="260.7" x2="213.0" y2="260.7" stroke="#78c278" stroke-width="1.0" />
<line x1="213.0" y1="260.7" x2="237.0" y2="260.7" stroke="#7a7a7a" stroke-width="1.0" />
<line x1="232.0" y1="260.7" x2="237.5" y2="260.7" stroke="#78c278" stroke-width="1.0" />
<text x="252.6" y="233.0" font-size="4.2" text-anchor="middle" fill="#111" font-weight="normal" transform="rotate(90 252.6 233.0)" >connector4</text>
<path d="M349.3,197.0 L353.0,200.2 L349.3,203.4 Z" fill="#c4f4c4" stroke="#8be08b" stroke-width="0.6" stroke-linejoin="round"/>
<rect x="342.6" y="197.3" width="7.2" height="5.8" rx="0.5" fill="#fff" stroke="#a0a0a0" stroke-width="0.5"/>
<text transform="translate(346.2,201.8) scale(0.88,1)" font-size="4.5" text-anchor="middle" fill="#000">VCC</text>
<line x1="353.0" y1="200.2" x2="366.0" y2="200.2" stroke="#78c278" stroke-width="1.0" />
<line x1="353.0" y1="200.2" x2="367.9" y2="200.2" stroke="#9be09b" stroke-width="2.0" opacity="0.5"/>
<line x1="353.0" y1="200.2" x2="362.9" y2="200.2" stroke="#747474" stroke-width="1.0" />
<line x1="362.9" y1="200.2" x2="375.8" y2="200.2" stroke="#484848" stroke-width="1.1" />
<path d="M377.8,200.2 L373.4,198.2 L374.8,200.2 L373.4,202.2 Z" fill="#111"/>
<text x="379.6" y="201.9" font-size="4.4" text-anchor="start" fill="#111" font-weight="normal" >VCC</text>
<path d="M349.3,203.2 L353.0,206.4 L349.3,209.6 Z" fill="#c4f4c4" stroke="#8be08b" stroke-width="0.6" stroke-linejoin="round"/>
<rect x="342.6" y="203.5" width="7.2" height="5.8" rx="0.5" fill="#fff" stroke="#a0a0a0" stroke-width="0.5"/>
<text transform="translate(346.2,208.0) scale(0.88,1)" font-size="4.5" text-anchor="middle" fill="#000">GND</text>
<line x1="353.0" y1="206.4" x2="366.0" y2="206.4" stroke="#78c278" stroke-width="1.0" />
<line x1="353.0" y1="206.4" x2="367.9" y2="206.4" stroke="#9be09b" stroke-width="2.0" opacity="0.5"/>
<line x1="353.0" y1="206.4" x2="362.9" y2="206.4" stroke="#747474" stroke-width="1.0" />
<line x1="362.9" y1="206.4" x2="375.8" y2="206.4" stroke="#484848" stroke-width="1.1" />
<path d="M377.8,206.4 L373.4,204.4 L374.8,206.4 L373.4,208.4 Z" fill="#111"/>
<text x="379.6" y="208.1" font-size="4.4" text-anchor="start" fill="#111" font-weight="normal" >GND</text>
<rect x="353.3" y="212.8" width="18.0" height="54.3" rx="0.7" fill="#fff" stroke="#222" stroke-width="1.25"/>
<text x="362.3" y="216.7" font-size="4.4" text-anchor="middle" fill="#111" font-weight="normal" >Mux1</text>
<text x="363.8" y="233.2" font-size="2.4" text-anchor="middle" fill="#666" font-weight="normal" >4051</text>
<text x="354.9" y="219.5" font-size="2.3" text-anchor="start" fill="#999" font-weight="normal" >X4</text>
<text x="369.7" y="219.5" font-size="2.3" text-anchor="end" fill="#999" font-weight="normal" >VCC</text>
<text x="354.9" y="225.6" font-size="2.3" text-anchor="start" fill="#999" font-weight="normal" >X6</text>
<text x="369.7" y="225.6" font-size="2.3" text-anchor="end" fill="#999" font-weight="normal" >X2</text>
<text x="354.9" y="231.7" font-size="2.3" text-anchor="start" fill="#999" font-weight="normal" >X</text>
<text x="369.7" y="231.7" font-size="2.3" text-anchor="end" fill="#999" font-weight="normal" >X1</text>
<text x="354.9" y="237.8" font-size="2.3" text-anchor="start" fill="#999" font-weight="normal" >X7</text>
<text x="369.7" y="237.8" font-size="2.3" text-anchor="end" fill="#999" font-weight="normal" >X0</text>
<text x="354.9" y="243.9" font-size="2.3" text-anchor="start" fill="#999" font-weight="normal" >X5</text>
<text x="369.7" y="243.9" font-size="2.3" text-anchor="end" fill="#999" font-weight="normal" >X3</text>
<text x="354.9" y="250.0" font-size="2.3" text-anchor="start" fill="#999" font-weight="normal" >E</text>
<text x="369.7" y="250.0" font-size="2.3" text-anchor="end" fill="#999" font-weight="normal" >S0</text>
<text x="354.9" y="256.1" font-size="2.3" text-anchor="start" fill="#999" font-weight="normal" >VEE</text>
<text x="369.7" y="256.1" font-size="2.3" text-anchor="end" fill="#999" font-weight="normal" >S1</text>
<text x="354.9" y="262.2" font-size="2.3" text-anchor="start" fill="#999" font-weight="normal" >GND</text>
<text x="369.7" y="262.2" font-size="2.3" text-anchor="end" fill="#999" font-weight="normal" >S2</text>
<line x1="341.3" y1="218.6" x2="353.3" y2="218.6" stroke="#b84848" stroke-width="1.0" />
<line x1="341.3" y1="224.7" x2="353.3" y2="224.7" stroke="#b84848" stroke-width="1.0" />
<line x1="341.3" y1="236.9" x2="353.3" y2="236.9" stroke="#b84848" stroke-width="1.0" />
<line x1="341.3" y1="243.0" x2="353.3" y2="243.0" stroke="#b84848" stroke-width="1.0" />
<line x1="371.3" y1="224.7" x2="384.0" y2="224.7" stroke="#b84848" stroke-width="1.0" />
<line x1="371.3" y1="230.8" x2="384.0" y2="230.8" stroke="#b84848" stroke-width="1.0" />
<line x1="371.3" y1="236.9" x2="384.0" y2="236.9" stroke="#b84848" stroke-width="1.0" />
<line x1="371.3" y1="243.0" x2="384.0" y2="243.0" stroke="#b84848" stroke-width="1.0" />
<path d="M318.9,227.6 L322.6,230.8 L318.9,234.0 Z" fill="#c4f4c4" stroke="#8be08b" stroke-width="0.6" stroke-linejoin="round"/>
<rect x="308.5" y="227.9" width="10.9" height="5.8" rx="0.5" fill="#fff" stroke="#a0a0a0" stroke-width="0.5"/>
<text transform="translate(313.9,232.3) scale(0.88,1)" font-size="4.5" text-anchor="middle" fill="#000">Mux1</text>
<line x1="322.5" y1="230.8" x2="342.0" y2="230.8" stroke="#7a7a7a" stroke-width="1.0" />
<line x1="342.0" y1="230.8" x2="353.3" y2="230.8" stroke="#78c278" stroke-width="1.0" />
<path d="M281.9,227.6 L285.6,230.8 L281.9,234.0 Z" fill="#c4f4c4" stroke="#8be08b" stroke-width="0.6" stroke-linejoin="round"/>
<rect x="271.4" y="227.9" width="11.0" height="5.8" rx="0.5" fill="#fff" stroke="#a0a0a0" stroke-width="0.5"/>
<text transform="translate(276.9,232.3) scale(0.88,1)" font-size="4.5" text-anchor="middle" fill="#000">Mux1</text>
<line x1="285.0" y1="230.8" x2="296.0" y2="230.8" stroke="#78c278" stroke-width="1.0" />
<line x1="285.4" y1="230.8" x2="297.0" y2="230.8" stroke="#9be09b" stroke-width="2.0" opacity="0.5"/>
<line x1="285.4" y1="230.8" x2="293.2" y2="230.8" stroke="#747474" stroke-width="1.0" />
<line x1="293.2" y1="230.8" x2="302.8" y2="230.8" stroke="#484848" stroke-width="1.1" />
<path d="M304.8,230.8 L300.4,228.8 L301.8,230.8 L300.4,232.8 Z" fill="#111"/>
<text x="288.0" y="225.3" font-size="4.4" text-anchor="start" fill="#111" font-weight="normal" >Mux1-A0</text>
<path d="M319.5,245.9 L323.2,249.1 L319.5,252.3 Z" fill="#c4f4c4" stroke="#8be08b" stroke-width="0.6" stroke-linejoin="round"/>
<rect x="310.6" y="246.2" width="9.4" height="5.8" rx="0.5" fill="#fff" stroke="#a0a0a0" stroke-width="0.5"/>
<text transform="translate(315.3,250.7) scale(0.88,1)" font-size="4.5" text-anchor="middle" fill="#000">GND</text>
<line x1="323.0" y1="249.1" x2="342.0" y2="249.1" stroke="#7a7a7a" stroke-width="1.0" />
<line x1="342.0" y1="249.1" x2="353.3" y2="249.1" stroke="#78c278" stroke-width="1.0" />
<path d="M319.5,252.0 L323.2,255.2 L319.5,258.4 Z" fill="#c4f4c4" stroke="#8be08b" stroke-width="0.6" stroke-linejoin="round"/>
<rect x="310.6" y="252.3" width="9.4" height="5.8" rx="0.5" fill="#fff" stroke="#a0a0a0" stroke-width="0.5"/>
<text transform="translate(315.3,256.8) scale(0.88,1)" font-size="4.5" text-anchor="middle" fill="#000">GND</text>
<line x1="323.0" y1="255.2" x2="342.0" y2="255.2" stroke="#7a7a7a" stroke-width="1.0" />
<line x1="342.0" y1="255.2" x2="353.3" y2="255.2" stroke="#78c278" stroke-width="1.0" />
<path d="M319.5,258.1 L323.2,261.3 L319.5,264.5 Z" fill="#c4f4c4" stroke="#8be08b" stroke-width="0.6" stroke-linejoin="round"/>
<rect x="310.6" y="258.4" width="9.4" height="5.8" rx="0.5" fill="#fff" stroke="#a0a0a0" stroke-width="0.5"/>
<text transform="translate(315.3,262.9) scale(0.88,1)" font-size="4.5" text-anchor="middle" fill="#000">GND</text>
<line x1="323.0" y1="261.3" x2="342.0" y2="261.3" stroke="#7a7a7a" stroke-width="1.0" />
<line x1="342.0" y1="261.3" x2="353.3" y2="261.3" stroke="#78c278" stroke-width="1.0" />
<path d="M406.5,215.4 L402.8,218.6 L406.5,221.8 Z" fill="#c4f4c4" stroke="#8be08b" stroke-width="0.6" stroke-linejoin="round"/>
<rect x="406.0" y="215.7" width="7.6" height="5.8" rx="0.5" fill="#fff" stroke="#a0a0a0" stroke-width="0.5"/>
<text transform="translate(409.8,220.2) scale(0.88,1)" font-size="4.5" text-anchor="middle" fill="#000">VCC</text>
<line x1="371.3" y1="218.6" x2="378.0" y2="218.6" stroke="#78c278" stroke-width="1.0" />
<line x1="378.0" y1="218.6" x2="402.5" y2="218.6" stroke="#7a7a7a" stroke-width="1.0" />
<path d="M406.5,245.9 L402.8,249.1 L406.5,252.3 Z" fill="#c4f4c4" stroke="#8be08b" stroke-width="0.6" stroke-linejoin="round"/>
<rect x="406.0" y="246.2" width="15.8" height="5.8" rx="0.5" fill="#fff" stroke="#a0a0a0" stroke-width="0.5"/>
<text transform="translate(413.9,250.7) scale(0.88,1)" font-size="4.5" text-anchor="middle" fill="#000">Mux150</text>
<line x1="371.3" y1="249.1" x2="378.0" y2="249.1" stroke="#78c278" stroke-width="1.0" />
<line x1="378.0" y1="249.1" x2="402.5" y2="249.1" stroke="#7a7a7a" stroke-width="1.0" />
<line x1="397.0" y1="249.1" x2="402.6" y2="249.1" stroke="#78c278" stroke-width="1.0" />
<path d="M447.9,245.9 L451.6,249.1 L447.9,252.3 Z" fill="#c4f4c4" stroke="#8be08b" stroke-width="0.6" stroke-linejoin="round"/>
<rect x="431.5" y="246.2" width="16.9" height="5.8" rx="0.5" fill="#fff" stroke="#a0a0a0" stroke-width="0.5"/>
<text transform="translate(439.9,250.7) scale(0.88,1)" font-size="4.5" text-anchor="middle" fill="#000">Mux150</text>
<line x1="451.5" y1="249.1" x2="466.0" y2="249.1" stroke="#78c278" stroke-width="1.0" />
<line x1="452.0" y1="249.1" x2="466.4" y2="249.1" stroke="#9be09b" stroke-width="2.0" opacity="0.5"/>
<line x1="452.0" y1="249.1" x2="461.6" y2="249.1" stroke="#747474" stroke-width="1.0" />
<line x1="461.6" y1="249.1" x2="474.0" y2="249.1" stroke="#484848" stroke-width="1.1" />
<path d="M476.0,249.1 L471.6,247.1 L473.0,249.1 L471.6,251.1 Z" fill="#111"/>
<path d="M406.5,252.0 L402.8,255.2 L406.5,258.4 Z" fill="#c4f4c4" stroke="#8be08b" stroke-width="0.6" stroke-linejoin="round"/>
<rect x="406.0" y="252.3" width="15.8" height="5.8" rx="0.5" fill="#fff" stroke="#a0a0a0" stroke-width="0.5"/>
<text transform="translate(413.9,256.8) scale(0.88,1)" font-size="4.5" text-anchor="middle" fill="#000">Mux151</text>
<line x1="371.3" y1="255.2" x2="378.0" y2="255.2" stroke="#78c278" stroke-width="1.0" />
<line x1="378.0" y1="255.2" x2="402.5" y2="255.2" stroke="#7a7a7a" stroke-width="1.0" />
<line x1="397.0" y1="255.2" x2="402.6" y2="255.2" stroke="#78c278" stroke-width="1.0" />
<path d="M447.9,252.0 L451.6,255.2 L447.9,258.4 Z" fill="#c4f4c4" stroke="#8be08b" stroke-width="0.6" stroke-linejoin="round"/>
<rect x="431.5" y="252.3" width="16.9" height="5.8" rx="0.5" fill="#fff" stroke="#a0a0a0" stroke-width="0.5"/>
<text transform="translate(439.9,256.8) scale(0.88,1)" font-size="4.5" text-anchor="middle" fill="#000">Mux151</text>
<line x1="451.5" y1="255.2" x2="466.0" y2="255.2" stroke="#78c278" stroke-width="1.0" />
<line x1="452.0" y1="255.2" x2="466.4" y2="255.2" stroke="#9be09b" stroke-width="2.0" opacity="0.5"/>
<line x1="452.0" y1="255.2" x2="461.6" y2="255.2" stroke="#747474" stroke-width="1.0" />
<line x1="461.6" y1="255.2" x2="474.0" y2="255.2" stroke="#484848" stroke-width="1.1" />
<path d="M476.0,255.2 L471.6,253.2 L473.0,255.2 L471.6,257.2 Z" fill="#111"/>
<path d="M406.5,258.1 L402.8,261.3 L406.5,264.5 Z" fill="#c4f4c4" stroke="#8be08b" stroke-width="0.6" stroke-linejoin="round"/>
<rect x="406.0" y="258.4" width="15.8" height="5.8" rx="0.5" fill="#fff" stroke="#a0a0a0" stroke-width="0.5"/>
<text transform="translate(413.9,262.9) scale(0.88,1)" font-size="4.5" text-anchor="middle" fill="#000">Mux152</text>
<line x1="371.3" y1="261.3" x2="378.0" y2="261.3" stroke="#78c278" stroke-width="1.0" />
<line x1="378.0" y1="261.3" x2="402.5" y2="261.3" stroke="#7a7a7a" stroke-width="1.0" />
<line x1="397.0" y1="261.3" x2="402.6" y2="261.3" stroke="#78c278" stroke-width="1.0" />
<path d="M447.9,258.1 L451.6,261.3 L447.9,264.5 Z" fill="#c4f4c4" stroke="#8be08b" stroke-width="0.6" stroke-linejoin="round"/>
<rect x="431.5" y="258.4" width="16.9" height="5.8" rx="0.5" fill="#fff" stroke="#a0a0a0" stroke-width="0.5"/>
<text transform="translate(439.9,262.9) scale(0.88,1)" font-size="4.5" text-anchor="middle" fill="#000">Mux152</text>
<line x1="451.5" y1="261.3" x2="466.0" y2="261.3" stroke="#78c278" stroke-width="1.0" />
<line x1="452.0" y1="261.3" x2="466.4" y2="261.3" stroke="#9be09b" stroke-width="2.0" opacity="0.5"/>
<line x1="452.0" y1="261.3" x2="461.6" y2="261.3" stroke="#747474" stroke-width="1.0" />
<line x1="461.6" y1="261.3" x2="474.0" y2="261.3" stroke="#484848" stroke-width="1.1" />
<path d="M476.0,261.3 L471.6,259.3 L473.0,261.3 L471.6,263.3 Z" fill="#111"/>
<text x="458.4" y="244.8" font-size="4.4" text-anchor="start" fill="#111" font-weight="normal" >Mux150-2</text>
<rect x="353.3" y="292.3" width="18.0" height="54.3" rx="0.7" fill="#fff" stroke="#222" stroke-width="1.25"/>
<text x="362.3" y="296.2" font-size="4.4" text-anchor="middle" fill="#111" font-weight="normal" >Mux2</text>
<text x="363.8" y="312.7" font-size="2.4" text-anchor="middle" fill="#666" font-weight="normal" >4051</text>
<text x="354.9" y="299.0" font-size="2.3" text-anchor="start" fill="#999" font-weight="normal" >X4</text>
<text x="369.7" y="299.0" font-size="2.3" text-anchor="end" fill="#999" font-weight="normal" >VCC</text>
<text x="354.9" y="305.1" font-size="2.3" text-anchor="start" fill="#999" font-weight="normal" >X6</text>
<text x="369.7" y="305.1" font-size="2.3" text-anchor="end" fill="#999" font-weight="normal" >X2</text>
<text x="354.9" y="311.2" font-size="2.3" text-anchor="start" fill="#999" font-weight="normal" >X</text>
<text x="369.7" y="311.2" font-size="2.3" text-anchor="end" fill="#999" font-weight="normal" >X1</text>
<text x="354.9" y="317.3" font-size="2.3" text-anchor="start" fill="#999" font-weight="normal" >X7</text>
<text x="369.7" y="317.3" font-size="2.3" text-anchor="end" fill="#999" font-weight="normal" >X0</text>
<text x="354.9" y="323.4" font-size="2.3" text-anchor="start" fill="#999" font-weight="normal" >X5</text>
<text x="369.7" y="323.4" font-size="2.3" text-anchor="end" fill="#999" font-weight="normal" >X3</text>
<text x="354.9" y="329.5" font-size="2.3" text-anchor="start" fill="#999" font-weight="normal" >E</text>
<text x="369.7" y="329.5" font-size="2.3" text-anchor="end" fill="#999" font-weight="normal" >S0</text>
<text x="354.9" y="335.6" font-size="2.3" text-anchor="start" fill="#999" font-weight="normal" >VEE</text>
<text x="369.7" y="335.6" font-size="2.3" text-anchor="end" fill="#999" font-weight="normal" >S1</text>
<text x="354.9" y="341.7" font-size="2.3" text-anchor="start" fill="#999" font-weight="normal" >GND</text>
<text x="369.7" y="341.7" font-size="2.3" text-anchor="end" fill="#999" font-weight="normal" >S2</text>
<line x1="341.3" y1="298.1" x2="353.3" y2="298.1" stroke="#b84848" stroke-width="1.0" />
<line x1="341.3" y1="304.2" x2="353.3" y2="304.2" stroke="#b84848" stroke-width="1.0" />
<line x1="341.3" y1="316.4" x2="353.3" y2="316.4" stroke="#b84848" stroke-width="1.0" />
<line x1="341.3" y1="322.5" x2="353.3" y2="322.5" stroke="#b84848" stroke-width="1.0" />
<line x1="371.3" y1="304.2" x2="384.0" y2="304.2" stroke="#b84848" stroke-width="1.0" />
<line x1="371.3" y1="310.3" x2="384.0" y2="310.3" stroke="#b84848" stroke-width="1.0" />
<line x1="371.3" y1="316.4" x2="384.0" y2="316.4" stroke="#b84848" stroke-width="1.0" />
<line x1="371.3" y1="322.5" x2="384.0" y2="322.5" stroke="#b84848" stroke-width="1.0" />
<path d="M318.9,307.1 L322.6,310.3 L318.9,313.5 Z" fill="#c4f4c4" stroke="#8be08b" stroke-width="0.6" stroke-linejoin="round"/>
<rect x="308.5" y="307.4" width="10.9" height="5.8" rx="0.5" fill="#fff" stroke="#a0a0a0" stroke-width="0.5"/>
<text transform="translate(313.9,311.9) scale(0.88,1)" font-size="4.5" text-anchor="middle" fill="#000">Mux2</text>
<line x1="322.5" y1="310.3" x2="342.0" y2="310.3" stroke="#7a7a7a" stroke-width="1.0" />
<line x1="342.0" y1="310.3" x2="353.3" y2="310.3" stroke="#78c278" stroke-width="1.0" />
<path d="M281.9,307.1 L285.6,310.3 L281.9,313.5 Z" fill="#c4f4c4" stroke="#8be08b" stroke-width="0.6" stroke-linejoin="round"/>
<rect x="271.4" y="307.4" width="11.0" height="5.8" rx="0.5" fill="#fff" stroke="#a0a0a0" stroke-width="0.5"/>
<text transform="translate(276.9,311.9) scale(0.88,1)" font-size="4.5" text-anchor="middle" fill="#000">Mux2</text>
<line x1="285.0" y1="310.3" x2="296.0" y2="310.3" stroke="#78c278" stroke-width="1.0" />
<line x1="285.4" y1="310.3" x2="297.0" y2="310.3" stroke="#9be09b" stroke-width="2.0" opacity="0.5"/>
<line x1="285.4" y1="310.3" x2="293.2" y2="310.3" stroke="#747474" stroke-width="1.0" />
<line x1="293.2" y1="310.3" x2="302.8" y2="310.3" stroke="#484848" stroke-width="1.1" />
<path d="M304.8,310.3 L300.4,308.3 L301.8,310.3 L300.4,312.3 Z" fill="#111"/>
<text x="288.0" y="304.8" font-size="4.4" text-anchor="start" fill="#111" font-weight="normal" >Mux2-A1</text>
<path d="M319.5,325.4 L323.2,328.6 L319.5,331.8 Z" fill="#c4f4c4" stroke="#8be08b" stroke-width="0.6" stroke-linejoin="round"/>
<rect x="310.6" y="325.7" width="9.4" height="5.8" rx="0.5" fill="#fff" stroke="#a0a0a0" stroke-width="0.5"/>
<text transform="translate(315.3,330.2) scale(0.88,1)" font-size="4.5" text-anchor="middle" fill="#000">GND</text>
<line x1="323.0" y1="328.6" x2="342.0" y2="328.6" stroke="#7a7a7a" stroke-width="1.0" />
<line x1="342.0" y1="328.6" x2="353.3" y2="328.6" stroke="#78c278" stroke-width="1.0" />
<path d="M319.5,331.5 L323.2,334.7 L319.5,337.9 Z" fill="#c4f4c4" stroke="#8be08b" stroke-width="0.6" stroke-linejoin="round"/>
<rect x="310.6" y="331.8" width="9.4" height="5.8" rx="0.5" fill="#fff" stroke="#a0a0a0" stroke-width="0.5"/>
<text transform="translate(315.3,336.3) scale(0.88,1)" font-size="4.5" text-anchor="middle" fill="#000">GND</text>
<line x1="323.0" y1="334.7" x2="342.0" y2="334.7" stroke="#7a7a7a" stroke-width="1.0" />
<line x1="342.0" y1="334.7" x2="353.3" y2="334.7" stroke="#78c278" stroke-width="1.0" />
<path d="M319.5,337.6 L323.2,340.8 L319.5,344.0 Z" fill="#c4f4c4" stroke="#8be08b" stroke-width="0.6" stroke-linejoin="round"/>
<rect x="310.6" y="337.9" width="9.4" height="5.8" rx="0.5" fill="#fff" stroke="#a0a0a0" stroke-width="0.5"/>
<text transform="translate(315.3,342.4) scale(0.88,1)" font-size="4.5" text-anchor="middle" fill="#000">GND</text>
<line x1="323.0" y1="340.8" x2="342.0" y2="340.8" stroke="#7a7a7a" stroke-width="1.0" />
<line x1="342.0" y1="340.8" x2="353.3" y2="340.8" stroke="#78c278" stroke-width="1.0" />
<path d="M406.5,294.9 L402.8,298.1 L406.5,301.3 Z" fill="#c4f4c4" stroke="#8be08b" stroke-width="0.6" stroke-linejoin="round"/>
<rect x="406.0" y="295.2" width="7.6" height="5.8" rx="0.5" fill="#fff" stroke="#a0a0a0" stroke-width="0.5"/>
<text transform="translate(409.8,299.7) scale(0.88,1)" font-size="4.5" text-anchor="middle" fill="#000">VCC</text>
<line x1="371.3" y1="298.1" x2="378.0" y2="298.1" stroke="#78c278" stroke-width="1.0" />
<line x1="378.0" y1="298.1" x2="402.5" y2="298.1" stroke="#7a7a7a" stroke-width="1.0" />
<path d="M406.5,325.4 L402.8,328.6 L406.5,331.8 Z" fill="#c4f4c4" stroke="#8be08b" stroke-width="0.6" stroke-linejoin="round"/>
<rect x="406.0" y="325.7" width="15.8" height="5.8" rx="0.5" fill="#fff" stroke="#a0a0a0" stroke-width="0.5"/>
<text transform="translate(413.9,330.2) scale(0.88,1)" font-size="4.5" text-anchor="middle" fill="#000">Mux250</text>
<line x1="371.3" y1="328.6" x2="378.0" y2="328.6" stroke="#78c278" stroke-width="1.0" />
<line x1="378.0" y1="328.6" x2="402.5" y2="328.6" stroke="#7a7a7a" stroke-width="1.0" />
<line x1="397.0" y1="328.6" x2="402.6" y2="328.6" stroke="#78c278" stroke-width="1.0" />
<path d="M447.9,325.4 L451.6,328.6 L447.9,331.8 Z" fill="#c4f4c4" stroke="#8be08b" stroke-width="0.6" stroke-linejoin="round"/>
<rect x="431.5" y="325.7" width="16.9" height="5.8" rx="0.5" fill="#fff" stroke="#a0a0a0" stroke-width="0.5"/>
<text transform="translate(439.9,330.2) scale(0.88,1)" font-size="4.5" text-anchor="middle" fill="#000">Mux250</text>
<line x1="451.5" y1="328.6" x2="466.0" y2="328.6" stroke="#78c278" stroke-width="1.0" />
<line x1="452.0" y1="328.6" x2="466.4" y2="328.6" stroke="#9be09b" stroke-width="2.0" opacity="0.5"/>
<line x1="452.0" y1="328.6" x2="461.6" y2="328.6" stroke="#747474" stroke-width="1.0" />
<line x1="461.6" y1="328.6" x2="474.0" y2="328.6" stroke="#484848" stroke-width="1.1" />
<path d="M476.0,328.6 L471.6,326.6 L473.0,328.6 L471.6,330.6 Z" fill="#111"/>
<path d="M406.5,331.5 L402.8,334.7 L406.5,337.9 Z" fill="#c4f4c4" stroke="#8be08b" stroke-width="0.6" stroke-linejoin="round"/>
<rect x="406.0" y="331.8" width="15.8" height="5.8" rx="0.5" fill="#fff" stroke="#a0a0a0" stroke-width="0.5"/>
<text transform="translate(413.9,336.3) scale(0.88,1)" font-size="4.5" text-anchor="middle" fill="#000">Mux251</text>
<line x1="371.3" y1="334.7" x2="378.0" y2="334.7" stroke="#78c278" stroke-width="1.0" />
<line x1="378.0" y1="334.7" x2="402.5" y2="334.7" stroke="#7a7a7a" stroke-width="1.0" />
<line x1="397.0" y1="334.7" x2="402.6" y2="334.7" stroke="#78c278" stroke-width="1.0" />
<path d="M447.9,331.5 L451.6,334.7 L447.9,337.9 Z" fill="#c4f4c4" stroke="#8be08b" stroke-width="0.6" stroke-linejoin="round"/>
<rect x="431.5" y="331.8" width="16.9" height="5.8" rx="0.5" fill="#fff" stroke="#a0a0a0" stroke-width="0.5"/>
<text transform="translate(439.9,336.3) scale(0.88,1)" font-size="4.5" text-anchor="middle" fill="#000">Mux251</text>
<line x1="451.5" y1="334.7" x2="466.0" y2="334.7" stroke="#78c278" stroke-width="1.0" />
<line x1="452.0" y1="334.7" x2="466.4" y2="334.7" stroke="#9be09b" stroke-width="2.0" opacity="0.5"/>
<line x1="452.0" y1="334.7" x2="461.6" y2="334.7" stroke="#747474" stroke-width="1.0" />
<line x1="461.6" y1="334.7" x2="474.0" y2="334.7" stroke="#484848" stroke-width="1.1" />
<path d="M476.0,334.7 L471.6,332.7 L473.0,334.7 L471.6,336.7 Z" fill="#111"/>
<path d="M406.5,337.6 L402.8,340.8 L406.5,344.0 Z" fill="#c4f4c4" stroke="#8be08b" stroke-width="0.6" stroke-linejoin="round"/>
<rect x="406.0" y="337.9" width="15.8" height="5.8" rx="0.5" fill="#fff" stroke="#a0a0a0" stroke-width="0.5"/>
<text transform="translate(413.9,342.4) scale(0.88,1)" font-size="4.5" text-anchor="middle" fill="#000">Mux252</text>
<line x1="371.3" y1="340.8" x2="378.0" y2="340.8" stroke="#78c278" stroke-width="1.0" />
<line x1="378.0" y1="340.8" x2="402.5" y2="340.8" stroke="#7a7a7a" stroke-width="1.0" />
<line x1="397.0" y1="340.8" x2="402.6" y2="340.8" stroke="#78c278" stroke-width="1.0" />
<path d="M447.9,337.6 L451.6,340.8 L447.9,344.0 Z" fill="#c4f4c4" stroke="#8be08b" stroke-width="0.6" stroke-linejoin="round"/>
<rect x="431.5" y="337.9" width="16.9" height="5.8" rx="0.5" fill="#fff" stroke="#a0a0a0" stroke-width="0.5"/>
<text transform="translate(439.9,342.4) scale(0.88,1)" font-size="4.5" text-anchor="middle" fill="#000">Mux252</text>
<line x1="451.5" y1="340.8" x2="466.0" y2="340.8" stroke="#78c278" stroke-width="1.0" />
<line x1="452.0" y1="340.8" x2="466.4" y2="340.8" stroke="#9be09b" stroke-width="2.0" opacity="0.5"/>
<line x1="452.0" y1="340.8" x2="461.6" y2="340.8" stroke="#747474" stroke-width="1.0" />
<line x1="461.6" y1="340.8" x2="474.0" y2="340.8" stroke="#484848" stroke-width="1.1" />
<path d="M476.0,340.8 L471.6,338.8 L473.0,340.8 L471.6,342.8 Z" fill="#111"/>
<text x="458.4" y="324.3" font-size="4.4" text-anchor="start" fill="#111" font-weight="normal" >Mux250-2</text>
<rect x="353.3" y="371.8" width="18.0" height="54.3" rx="0.7" fill="#fff" stroke="#222" stroke-width="1.25"/>
<text x="362.3" y="375.7" font-size="4.4" text-anchor="middle" fill="#111" font-weight="normal" >Mux3</text>
<text x="363.8" y="392.2" font-size="2.4" text-anchor="middle" fill="#666" font-weight="normal" >4051</text>
<text x="354.9" y="378.5" font-size="2.3" text-anchor="start" fill="#999" font-weight="normal" >X4</text>
<text x="369.7" y="378.5" font-size="2.3" text-anchor="end" fill="#999" font-weight="normal" >VCC</text>
<text x="354.9" y="384.6" font-size="2.3" text-anchor="start" fill="#999" font-weight="normal" >X6</text>
<text x="369.7" y="384.6" font-size="2.3" text-anchor="end" fill="#999" font-weight="normal" >X2</text>
<text x="354.9" y="390.7" font-size="2.3" text-anchor="start" fill="#999" font-weight="normal" >X</text>
<text x="369.7" y="390.7" font-size="2.3" text-anchor="end" fill="#999" font-weight="normal" >X1</text>
<text x="354.9" y="396.8" font-size="2.3" text-anchor="start" fill="#999" font-weight="normal" >X7</text>
<text x="369.7" y="396.8" font-size="2.3" text-anchor="end" fill="#999" font-weight="normal" >X0</text>
<text x="354.9" y="402.9" font-size="2.3" text-anchor="start" fill="#999" font-weight="normal" >X5</text>
<text x="369.7" y="402.9" font-size="2.3" text-anchor="end" fill="#999" font-weight="normal" >X3</text>
<text x="354.9" y="409.0" font-size="2.3" text-anchor="start" fill="#999" font-weight="normal" >E</text>
<text x="369.7" y="409.0" font-size="2.3" text-anchor="end" fill="#999" font-weight="normal" >S0</text>
<text x="354.9" y="415.1" font-size="2.3" text-anchor="start" fill="#999" font-weight="normal" >VEE</text>
<text x="369.7" y="415.1" font-size="2.3" text-anchor="end" fill="#999" font-weight="normal" >S1</text>
<text x="354.9" y="421.2" font-size="2.3" text-anchor="start" fill="#999" font-weight="normal" >GND</text>
<text x="369.7" y="421.2" font-size="2.3" text-anchor="end" fill="#999" font-weight="normal" >S2</text>
<line x1="341.3" y1="377.6" x2="353.3" y2="377.6" stroke="#b84848" stroke-width="1.0" />
<line x1="341.3" y1="383.7" x2="353.3" y2="383.7" stroke="#b84848" stroke-width="1.0" />
<line x1="341.3" y1="395.9" x2="353.3" y2="395.9" stroke="#b84848" stroke-width="1.0" />
<line x1="341.3" y1="402.0" x2="353.3" y2="402.0" stroke="#b84848" stroke-width="1.0" />
<line x1="371.3" y1="383.7" x2="384.0" y2="383.7" stroke="#b84848" stroke-width="1.0" />
<line x1="371.3" y1="389.8" x2="384.0" y2="389.8" stroke="#b84848" stroke-width="1.0" />
<line x1="371.3" y1="395.9" x2="384.0" y2="395.9" stroke="#b84848" stroke-width="1.0" />
<line x1="371.3" y1="402.0" x2="384.0" y2="402.0" stroke="#b84848" stroke-width="1.0" />
<path d="M318.9,386.6 L322.6,389.8 L318.9,393.0 Z" fill="#c4f4c4" stroke="#8be08b" stroke-width="0.6" stroke-linejoin="round"/>
<rect x="308.5" y="386.9" width="10.9" height="5.8" rx="0.5" fill="#fff" stroke="#a0a0a0" stroke-width="0.5"/>
<text transform="translate(313.9,391.4) scale(0.88,1)" font-size="4.5" text-anchor="middle" fill="#000">Mux3</text>
<line x1="322.5" y1="389.8" x2="342.0" y2="389.8" stroke="#7a7a7a" stroke-width="1.0" />
<line x1="342.0" y1="389.8" x2="353.3" y2="389.8" stroke="#78c278" stroke-width="1.0" />
<path d="M281.9,386.6 L285.6,389.8 L281.9,393.0 Z" fill="#c4f4c4" stroke="#8be08b" stroke-width="0.6" stroke-linejoin="round"/>
<rect x="271.4" y="386.9" width="11.0" height="5.8" rx="0.5" fill="#fff" stroke="#a0a0a0" stroke-width="0.5"/>
<text transform="translate(276.9,391.4) scale(0.88,1)" font-size="4.5" text-anchor="middle" fill="#000">Mux3</text>
<line x1="285.0" y1="389.8" x2="296.0" y2="389.8" stroke="#78c278" stroke-width="1.0" />
<line x1="285.4" y1="389.8" x2="297.0" y2="389.8" stroke="#9be09b" stroke-width="2.0" opacity="0.5"/>
<line x1="285.4" y1="389.8" x2="293.2" y2="389.8" stroke="#747474" stroke-width="1.0" />
<line x1="293.2" y1="389.8" x2="302.8" y2="389.8" stroke="#484848" stroke-width="1.1" />
<path d="M304.8,389.8 L300.4,387.8 L301.8,389.8 L300.4,391.8 Z" fill="#111"/>
<text x="288.0" y="384.3" font-size="4.4" text-anchor="start" fill="#111" font-weight="normal" >Mux3-A2</text>
<path d="M319.5,404.9 L323.2,408.1 L319.5,411.3 Z" fill="#c4f4c4" stroke="#8be08b" stroke-width="0.6" stroke-linejoin="round"/>
<rect x="310.6" y="405.2" width="9.4" height="5.8" rx="0.5" fill="#fff" stroke="#a0a0a0" stroke-width="0.5"/>
<text transform="translate(315.3,409.7) scale(0.88,1)" font-size="4.5" text-anchor="middle" fill="#000">GND</text>
<line x1="323.0" y1="408.1" x2="342.0" y2="408.1" stroke="#7a7a7a" stroke-width="1.0" />
<line x1="342.0" y1="408.1" x2="353.3" y2="408.1" stroke="#78c278" stroke-width="1.0" />
<path d="M319.5,411.0 L323.2,414.2 L319.5,417.4 Z" fill="#c4f4c4" stroke="#8be08b" stroke-width="0.6" stroke-linejoin="round"/>
<rect x="310.6" y="411.3" width="9.4" height="5.8" rx="0.5" fill="#fff" stroke="#a0a0a0" stroke-width="0.5"/>
<text transform="translate(315.3,415.8) scale(0.88,1)" font-size="4.5" text-anchor="middle" fill="#000">GND</text>
<line x1="323.0" y1="414.2" x2="342.0" y2="414.2" stroke="#7a7a7a" stroke-width="1.0" />
<line x1="342.0" y1="414.2" x2="353.3" y2="414.2" stroke="#78c278" stroke-width="1.0" />
<path d="M319.5,417.1 L323.2,420.3 L319.5,423.5 Z" fill="#c4f4c4" stroke="#8be08b" stroke-width="0.6" stroke-linejoin="round"/>
<rect x="310.6" y="417.4" width="9.4" height="5.8" rx="0.5" fill="#fff" stroke="#a0a0a0" stroke-width="0.5"/>
<text transform="translate(315.3,421.9) scale(0.88,1)" font-size="4.5" text-anchor="middle" fill="#000">GND</text>
<line x1="323.0" y1="420.3" x2="342.0" y2="420.3" stroke="#7a7a7a" stroke-width="1.0" />
<line x1="342.0" y1="420.3" x2="353.3" y2="420.3" stroke="#78c278" stroke-width="1.0" />
<path d="M406.5,374.4 L402.8,377.6 L406.5,380.8 Z" fill="#c4f4c4" stroke="#8be08b" stroke-width="0.6" stroke-linejoin="round"/>
<rect x="406.0" y="374.7" width="7.6" height="5.8" rx="0.5" fill="#fff" stroke="#a0a0a0" stroke-width="0.5"/>
<text transform="translate(409.8,379.2) scale(0.88,1)" font-size="4.5" text-anchor="middle" fill="#000">VCC</text>
<line x1="371.3" y1="377.6" x2="378.0" y2="377.6" stroke="#78c278" stroke-width="1.0" />
<line x1="378.0" y1="377.6" x2="402.5" y2="377.6" stroke="#7a7a7a" stroke-width="1.0" />
<path d="M406.5,404.9 L402.8,408.1 L406.5,411.3 Z" fill="#c4f4c4" stroke="#8be08b" stroke-width="0.6" stroke-linejoin="round"/>
<rect x="406.0" y="405.2" width="15.8" height="5.8" rx="0.5" fill="#fff" stroke="#a0a0a0" stroke-width="0.5"/>
<text transform="translate(413.9,409.7) scale(0.88,1)" font-size="4.5" text-anchor="middle" fill="#000">Mux350</text>
<line x1="371.3" y1="408.1" x2="378.0" y2="408.1" stroke="#78c278" stroke-width="1.0" />
<line x1="378.0" y1="408.1" x2="402.5" y2="408.1" stroke="#7a7a7a" stroke-width="1.0" />
<line x1="397.0" y1="408.1" x2="402.6" y2="408.1" stroke="#78c278" stroke-width="1.0" />
<path d="M447.9,404.9 L451.6,408.1 L447.9,411.3 Z" fill="#c4f4c4" stroke="#8be08b" stroke-width="0.6" stroke-linejoin="round"/>
<rect x="431.5" y="405.2" width="16.9" height="5.8" rx="0.5" fill="#fff" stroke="#a0a0a0" stroke-width="0.5"/>
<text transform="translate(439.9,409.7) scale(0.88,1)" font-size="4.5" text-anchor="middle" fill="#000">Mux350</text>
<line x1="451.5" y1="408.1" x2="466.0" y2="408.1" stroke="#78c278" stroke-width="1.0" />
<line x1="452.0" y1="408.1" x2="466.4" y2="408.1" stroke="#9be09b" stroke-width="2.0" opacity="0.5"/>
<line x1="452.0" y1="408.1" x2="461.6" y2="408.1" stroke="#747474" stroke-width="1.0" />
<line x1="461.6" y1="408.1" x2="474.0" y2="408.1" stroke="#484848" stroke-width="1.1" />
<path d="M476.0,408.1 L471.6,406.1 L473.0,408.1 L471.6,410.1 Z" fill="#111"/>
<path d="M406.5,411.0 L402.8,414.2 L406.5,417.4 Z" fill="#c4f4c4" stroke="#8be08b" stroke-width="0.6" stroke-linejoin="round"/>
<rect x="406.0" y="411.3" width="15.8" height="5.8" rx="0.5" fill="#fff" stroke="#a0a0a0" stroke-width="0.5"/>
<text transform="translate(413.9,415.8) scale(0.88,1)" font-size="4.5" text-anchor="middle" fill="#000">Mux351</text>
<line x1="371.3" y1="414.2" x2="378.0" y2="414.2" stroke="#78c278" stroke-width="1.0" />
<line x1="378.0" y1="414.2" x2="402.5" y2="414.2" stroke="#7a7a7a" stroke-width="1.0" />
<line x1="397.0" y1="414.2" x2="402.6" y2="414.2" stroke="#78c278" stroke-width="1.0" />
<path d="M447.9,411.0 L451.6,414.2 L447.9,417.4 Z" fill="#c4f4c4" stroke="#8be08b" stroke-width="0.6" stroke-linejoin="round"/>
<rect x="431.5" y="411.3" width="16.9" height="5.8" rx="0.5" fill="#fff" stroke="#a0a0a0" stroke-width="0.5"/>
<text transform="translate(439.9,415.8) scale(0.88,1)" font-size="4.5" text-anchor="middle" fill="#000">Mux351</text>
<line x1="451.5" y1="414.2" x2="466.0" y2="414.2" stroke="#78c278" stroke-width="1.0" />
<line x1="452.0" y1="414.2" x2="466.4" y2="414.2" stroke="#9be09b" stroke-width="2.0" opacity="0.5"/>
<line x1="452.0" y1="414.2" x2="461.6" y2="414.2" stroke="#747474" stroke-width="1.0" />
<line x1="461.6" y1="414.2" x2="474.0" y2="414.2" stroke="#484848" stroke-width="1.1" />
<path d="M476.0,414.2 L471.6,412.2 L473.0,414.2 L471.6,416.2 Z" fill="#111"/>
<path d="M406.5,417.1 L402.8,420.3 L406.5,423.5 Z" fill="#c4f4c4" stroke="#8be08b" stroke-width="0.6" stroke-linejoin="round"/>
<rect x="406.0" y="417.4" width="15.8" height="5.8" rx="0.5" fill="#fff" stroke="#a0a0a0" stroke-width="0.5"/>
<text transform="translate(413.9,421.9) scale(0.88,1)" font-size="4.5" text-anchor="middle" fill="#000">Mux352</text>
<line x1="371.3" y1="420.3" x2="378.0" y2="420.3" stroke="#78c278" stroke-width="1.0" />
<line x1="378.0" y1="420.3" x2="402.5" y2="420.3" stroke="#7a7a7a" stroke-width="1.0" />
<line x1="397.0" y1="420.3" x2="402.6" y2="420.3" stroke="#78c278" stroke-width="1.0" />
<path d="M447.9,417.1 L451.6,420.3 L447.9,423.5 Z" fill="#c4f4c4" stroke="#8be08b" stroke-width="0.6" stroke-linejoin="round"/>
<rect x="431.5" y="417.4" width="16.9" height="5.8" rx="0.5" fill="#fff" stroke="#a0a0a0" stroke-width="0.5"/>
<text transform="translate(439.9,421.9) scale(0.88,1)" font-size="4.5" text-anchor="middle" fill="#000">Mux352</text>
<line x1="451.5" y1="420.3" x2="466.0" y2="420.3" stroke="#78c278" stroke-width="1.0" />
<line x1="452.0" y1="420.3" x2="466.4" y2="420.3" stroke="#9be09b" stroke-width="2.0" opacity="0.5"/>
<line x1="452.0" y1="420.3" x2="461.6" y2="420.3" stroke="#747474" stroke-width="1.0" />
<line x1="461.6" y1="420.3" x2="474.0" y2="420.3" stroke="#484848" stroke-width="1.1" />
<path d="M476.0,420.3 L471.6,418.3 L473.0,420.3 L471.6,422.3 Z" fill="#111"/>
<text x="458.4" y="403.8" font-size="4.4" text-anchor="start" fill="#111" font-weight="normal" >Mux350-2</text>
</g></svg>
<div class="a" id="tool"></div><div class="a" id="status"></div>
<svg class="a" style="left:0;top:455px" width="496" height="45" viewBox="0 455 496 45" font-family="Liberation Sans, sans-serif"><path d="M16.2,465.1 H22.6 L27,469.6 V476.5 H16.2 Z M22.6,465.1 V469.6 H27" fill="none" stroke="#fff" stroke-width="1.2" stroke-linejoin="round"/><text x="15.1" y="486.2" font-size="5.2" fill="#f8d6d2" textLength="11.8" lengthAdjust="spacingAndGlyphs">Notiz</text><path d="M63.4,466.3 A5,5 0 1 0 67.2,473.4 Q68.4,470.4 70.6,468.6" fill="none" stroke="#f2a39a" stroke-width="1"/><path d="M67.4,468 L71.2,468 L71.2,471.8" fill="none" stroke="#f2a39a" stroke-width="1"/><path d="M73,475.6 h3 l-1.5,1.8 z" fill="#fff"/><text x="55.3" y="486.2" font-size="5.4" fill="#fff" font-weight="bold" textLength="17.3" lengthAdjust="spacingAndGlyphs">Drehen</text><path d="M102,470.8 L105.9,473.5 L102,476.2 Z M113.1,470.8 L109.2,473.5 L113.1,476.2 Z" fill="#f2a39a"/><path d="M107.5,469 V477.4" stroke="#f2a39a" stroke-width="0.7" stroke-dasharray="1.2 0.8"/><path d="M104.2,468.6 Q107.4,464.4 110.8,467.4" fill="none" stroke="#f2a39a" stroke-width="0.9"/><path d="M111.4,465.4 V468.2 H108.8" fill="none" stroke="#f2a39a" stroke-width="0.9"/><path d="M116.4,475.8 h3 l-1.5,1.8 z" fill="#fff"/><text x="95" y="486.2" font-size="5.4" fill="#fff" font-weight="bold" textLength="24" lengthAdjust="spacingAndGlyphs">Umdrehen</text><path d="M145.8,466.9 H153.4 A2.4,2.4 0 0 1 153.4,471.7 H147 A2.25,2.25 0 0 0 147,476.2 H150.6" fill="none" stroke="#fff" stroke-width="1.3"/><path d="M149.8,474.2 L152.6,476.2 L149.8,478.2 Z" fill="#fff"/><circle cx="144.6" cy="466.9" r="1.4" fill="#d32e22" stroke="#fff" stroke-width="1"/><circle cx="155.2" cy="475" r="1.7" fill="#f2a39a"/><text x="138.2" y="486.2" font-size="5.2" fill="#f8d6d2" textLength="23.1" lengthAdjust="spacingAndGlyphs">Autoroute</text><text x="274.1" y="475" font-size="8.4" fill="#f3998e" textLength="70.6" lengthAdjust="spacingAndGlyphs">Routing fertiggestellt</text><rect x="449.9" y="464.1" width="40" height="26.9" rx="0.8" fill="#17a355"/><rect x="449.9" y="488.6" width="40" height="2.4" fill="#0c7a3c"/><g fill="#5fc48a" stroke="#fff" stroke-width="1.05"><rect x="469.6" y="468.5" width="3.2" height="3.2"/><rect x="474.6" y="468.5" width="3.2" height="3.2"/><rect x="469.6" y="473.3" width="3.2" height="3.2"/><rect x="474.6" y="473.3" width="3.2" height="3.2"/></g><path d="M462,476.6 V474 Q462,471.7 464.4,471.7 H466.2" fill="none" stroke="#e8fff0" stroke-width="1.3"/><path d="M465.4,469.3 L468.4,471.7 L465.4,474.1 Z" fill="#e8fff0"/><text x="452" y="485.7" font-size="5.4" fill="#fff" textLength="35.2" lengthAdjust="spacingAndGlyphs">Veröffentlichen</text><text x="357.6" y="500.3" font-size="6" fill="#fff" font-weight="bold" textLength="36.4" lengthAdjust="spacingAndGlyphs">5.791 -2.699 in</text><text x="404" y="500.4" font-size="4.6" fill="#e9b5b0">176 %</text><circle cx="426.4" cy="498.6" r="2.6" fill="none" stroke="#f8e4e2" stroke-width="0.8"/><path d="M425,498.6 h2.8" stroke="#f8e4e2" stroke-width="0.8"/><path d="M431,498 H476" stroke="#c25047" stroke-width="0.8"/><circle cx="437.6" cy="497.6" r="2.1" fill="#fff"/><circle cx="480.8" cy="498.6" r="2.6" fill="none" stroke="#f8e4e2" stroke-width="0.8"/><path d="M479.4,498.6 h2.8 M480.8,497.2 v2.8" stroke="#f8e4e2" stroke-width="0.8"/></svg>
<div class="a" id="divider"></div>
<div class="a" style="left:495.2px;top:461px;width:2.3px;height:33px;background:#b0453c"></div>
<div class="a" id="panel"></div>
<svg class="a" style="left:495px;top:20px" width="130" height="480" viewBox="495 20 130 480" font-family="Liberation Sans, sans-serif" text-rendering="geometricPrecision"><text x="500.2" y="30.9" font-size="7.4" fill="#8c8c8c" textLength="25.6" lengthAdjust="spacingAndGlyphs">Bauteile</text><g fill="none" stroke="#666" stroke-width="0.8"><rect x="610.4" y="27.4" width="3.2" height="2.6"/><path d="M611.8,27.2 V26 H615 V28.6 H613.8"/><path d="M617.6,25.8 L621.6,29.8 M621.6,25.8 L617.6,29.8" stroke-width="0.9"/></g><rect x="497.5" y="33.4" width="15.4" height="14.2" fill="#b6b6b6" /><circle cx="503.4" cy="38.8" r="3" fill="none" stroke="#444" stroke-width="0.9"/><path d="M505.6,41.2 L509.4,45" stroke="#444" stroke-width="1.3"/><rect x="497.5" y="32.0" width="127.5" height="0.7" fill="#cfcfcf" /><rect x="513.4" y="33.0" width="111.6" height="12.4" fill="#e0e0e0" /><text x="517" y="43" font-size="8" font-weight="bold" fill="#3a3a3a" textLength="35" lengthAdjust="spacingAndGlyphs">Core Parts</text><path d="M617.2,38 h1.6 l-0.8,1 z" fill="#555"/><path d="M619.6,37.6 h2.6 M619.6,39 h2.6 M619.6,40.4 h2.6" stroke="#777" stroke-width="0.6"/><rect x="497.5" y="47.6" width="15.4" height="229.0" fill="#c0c0c0" /><rect x="497.5" y="262.8" width="15.4" height="14.0" fill="#cbcbcb" /><rect x="497.5" y="47.8" width="15.4" height="16.6" fill="#e3e3e3" /><text x="498.2" y="58" font-size="5.6" font-weight="bold" fill="#1a1a1a" textLength="12.4" lengthAdjust="spacingAndGlyphs">CORE</text><text x="498.2" y="73.6" font-size="5.8" fill="#8c8c8c" textLength="13.2" lengthAdjust="spacingAndGlyphs" font-family="Liberation Mono, monospace">MINE</text><g fill="none" stroke="#3a3a3a" stroke-width="1.3"><ellipse cx="501.7" cy="87" rx="2.9" ry="2.4"/><ellipse cx="507.7" cy="87" rx="2.9" ry="2.4"/></g><path d="M503,106.6 V100.4 Q502.4,98.4 504.4,97.6 Q503.8,99 505,99.2 Q506,97.6 505.4,96.4 Q508.6,97.2 507.8,100 Q509.6,100.4 508.6,102.6 Q507.2,104.4 505,104 Z" fill="#3a3a3a"/><g fill="none" stroke="#777" stroke-width="0.6"><path d="M501.8,120.6 Q497.6,116 501.4,111.2"/><path d="M504,120.8 Q502,116 504.4,111"/><path d="M506.4,120.8 Q508.4,116 506,111"/><path d="M508.6,120.6 Q512.8,116 509,111.2"/></g><text x="499" y="125" font-size="3.8" font-weight="bold" fill="#333" textLength="12.4" lengthAdjust="spacingAndGlyphs">seeed</text><ellipse cx="505.2" cy="133.6" rx="6" ry="3.5" fill="none" stroke="#8c8c8c" stroke-width="0.7" transform="rotate(-8 505.2 133.6)"/><text x="505.2" y="134.9" font-size="3.8" fill="#8c8c8c" text-anchor="middle">intel</text><rect x="498.0" y="143.1" width="12.2" height="12.4" fill="#555" /><path d="M501.4,145.4 L508.8,149.3 L501.4,153.2 Z" fill="#6c6c6c"/><circle cx="505.2" cy="164.6" r="4.2" fill="#444"/><circle cx="503.6" cy="164" r="1.3" fill="#c4c4c4"/><circle cx="506.8" cy="164" r="1.3" fill="#c4c4c4"/><path d="M500,184 V178.6 L502.4,177.2 V178.6 L504.8,177.2 V178.6 L507.2,177.2 V175 H510.4 V184 Z" fill="#3c3c3c"/><text x="498.2" y="199.6" font-size="10.4" fill="#c4c4c4" stroke="#2a2a2a" stroke-width="0.55" textLength="12.4" lengthAdjust="spacingAndGlyphs">PA</text><path d="M500.4,209.4 L502,207.6 H506 L506.8,206 H510.6 L509.4,207.8 L510.2,209.6 L508.4,210.4 V215.2 H507.2 V211.6 H503.6 V215.2 H502.4 V211 Z" fill="#4a4a4a"/><text x="499.6" y="227.6" font-size="5.6" fill="#808080" textLength="10.6" lengthAdjust="spacingAndGlyphs" font-family="Liberation Mono, monospace">CON</text><text x="499.6" y="233.6" font-size="5" fill="#808080" textLength="10.6" lengthAdjust="spacingAndGlyphs" font-family="Liberation Mono, monospace">TRIB</text><circle cx="505.2" cy="243" r="3.6" fill="#3a3a3a"/><circle cx="509.2" cy="243.0" r="1.5" fill="#3a3a3a"/><circle cx="507.2" cy="246.5" r="1.5" fill="#3a3a3a"/><circle cx="503.2" cy="246.5" r="1.5" fill="#3a3a3a"/><circle cx="501.2" cy="243.0" r="1.5" fill="#3a3a3a"/><circle cx="503.2" cy="239.5" r="1.5" fill="#3a3a3a"/><circle cx="507.2" cy="239.5" r="1.5" fill="#3a3a3a"/><rect x="498.2" y="254.8" width="12.8" height="6.0" fill="#2e2e2e" /><rect x="498.8" y="253.6" width="2" height="1.4" fill="#2e2e2e"/><rect x="502.0" y="253.6" width="2" height="1.4" fill="#2e2e2e"/><rect x="505.2" y="253.6" width="2" height="1.4" fill="#2e2e2e"/><rect x="508.4" y="253.6" width="2" height="1.4" fill="#2e2e2e"/><path d="M502.4,267 L505.2,263.4 L508,267 Z M502.4,270.6 L505.2,274.2 L508,270.6 Z" fill="#a6a6a6"/><svg x="515.8" y="45.4" width="17.2" height="13.2" viewBox="0 4.1 17.2 13.2" overflow="hidden"><rect width="17.2" height="17.3" fill="#fff"/><rect x="2" y="2" width="13" height="12" fill="#f4f4ee" /><circle cx="3.0" cy="6.0" r="0.5" fill="#556"/><circle cx="5.3" cy="9.2" r="0.5" fill="#556"/><circle cx="7.6" cy="12.4" r="0.5" fill="#556"/><circle cx="9.9" cy="7.6" r="0.5" fill="#556"/><circle cx="12.2" cy="10.8" r="0.5" fill="#556"/><circle cx="14.5" cy="6.0" r="0.5" fill="#556"/></svg><svg x="536.0" y="45.4" width="17.2" height="13.2" viewBox="0 4.1 17.2 13.2" overflow="hidden"><rect width="17.2" height="17.3" fill="#fff"/><rect x="5" y="2" width="7" height="13" fill="#2b2b2b" /><rect x="6.4" y="8" width="4.2" height="3" fill="#555" /></svg><svg x="556.2" y="45.4" width="17.2" height="13.2" viewBox="0 4.1 17.2 13.2" overflow="hidden"><rect width="17.2" height="17.3" fill="#fff"/><rect x="1.6" y="4.8" width="14" height="6.6" fill="#2f66a0" /><rect x="5" y="6.4" width="7" height="3.4" fill="#255285" /></svg><svg x="576.2" y="45.4" width="17.2" height="13.2" viewBox="0 4.1 17.2 13.2" overflow="hidden"><rect width="17.2" height="17.3" fill="#fff"/><rect x="1.6" y="4" width="14" height="8.6" fill="#1e1e1e" /><rect x="2.6" y="9" width="12" height="2.4" fill="#4a4a4a" /></svg><svg x="596.3" y="45.4" width="17.2" height="13.2" viewBox="0 4.1 17.2 13.2" overflow="hidden"><rect width="17.2" height="17.3" fill="#fff"/><rect x="1.4" y="4.6" width="14.4" height="7.6" fill="#5a1a22" /><rect x="3" y="6.4" width="11" height="3.4" fill="#7a2c36" /></svg><svg x="515.8" y="61.2" width="17.2" height="17.3" viewBox="0 0.0 17.2 17.3" overflow="hidden"><rect width="17.2" height="17.3" fill="#fff"/><rect x="0.8" y="0.8" width="15.6" height="15.8" fill="#2f8f4c" /><rect x="2.6" y="2.2" width="12" height="12" fill="#d4dde2" /><rect x="2.6" y="2.2" width="12" height="3" fill="#2a6896" /><rect x="2.4" y="14.2" width="1.8" height="1.4" fill="#fff" /></svg><svg x="536.0" y="61.2" width="17.2" height="17.3" viewBox="0 0.0 17.2 17.3" overflow="hidden"><rect width="17.2" height="17.3" fill="#fff"/><rect x="0.8" y="1" width="15.6" height="15.2" fill="#262626" /><g stroke="#c8c8c8" stroke-width="1.2" fill="none"><path d="M2.6,3.6 V12.8 L5.2,10.2 L7.8,12.8 V3.6 M10.2,6.4 V13 M10.2,3.6 v1.2 M12.8,13 V8 Q12.8,6.4 16,6.6"/></g><rect x="0.8" y="14" width="15.6" height="0.8" fill="#555" /></svg><svg x="556.2" y="61.2" width="17.2" height="17.3" viewBox="0 0.0 17.2 17.3" overflow="hidden"><rect width="17.2" height="17.3" fill="#fff"/><rect x="0.8" y="1" width="15.6" height="15.2" fill="#262626" /><g stroke="#c8c8c8" stroke-width="1.2" fill="none"><path d="M2.6,3.6 V12.8 L5.2,10.2 L7.8,12.8 V3.6 M10.2,6.4 V13 M10.2,3.6 v1.2 M12.8,13 V8 Q12.8,6.4 16,6.6"/></g><rect x="0.8" y="14" width="15.6" height="0.8" fill="#555" /></svg><svg x="576.2" y="61.2" width="17.2" height="17.3" viewBox="0 0.0 17.2 17.3" overflow="hidden"><rect width="17.2" height="17.3" fill="#fff"/><rect x="1" y="1" width="15.2" height="15.2" fill="#e8f3fa" /><rect x="1.4" y="1.4" width="14.4" height="14.4" fill="none" stroke="#3d8fc2" stroke-width="0.8"/><text x="8.6" y="10.4" font-size="5" fill="#2a7db5" font-weight="bold" text-anchor="middle" textLength="12" lengthAdjust="spacingAndGlyphs">mbed</text><path d="M2,13 H15" stroke="#3d8fc2" stroke-width="0.5"/></svg><svg x="596.3" y="61.2" width="17.2" height="17.3" viewBox="0 0.0 17.2 17.3" overflow="hidden"><rect width="17.2" height="17.3" fill="#fff"/><rect x="1.6" y="1.6" width="14" height="14" fill="#2e8f4c" /><text x="9.4" y="8" font-size="4.6" fill="#cfe9d6" font-weight="bold" text-anchor="middle" >812</text><rect x="3" y="10.6" width="2" height="2" fill="#1f6d38" /><rect x="7" y="10.6" width="2" height="2" fill="#1f6d38" /></svg><svg x="515.8" y="81.3" width="17.2" height="17.3" viewBox="0 0.0 17.2 17.3" overflow="hidden"><rect width="17.2" height="17.3" fill="#fff"/><rect x="1.6" y="3" width="14" height="11.6" fill="#1d1d1d" /><rect x="5.2" y="6" width="6.8" height="5" fill="#f2f2f2" /><path d="M6,10.4 L8.6,6.6 L11.2,10.4 Z" fill="#1d1d1d"/><rect x="3.0" y="1.6" width="1.4" height="1.6" fill="#1d1d1d" /><rect x="5.6" y="1.6" width="1.4" height="1.6" fill="#1d1d1d" /><rect x="8.2" y="1.6" width="1.4" height="1.6" fill="#1d1d1d" /><rect x="10.8" y="1.6" width="1.4" height="1.6" fill="#1d1d1d" /><rect x="13.4" y="1.6" width="1.4" height="1.6" fill="#1d1d1d" /><rect x="3.0" y="14.4" width="1.4" height="1.6" fill="#1d1d1d" /><rect x="5.6" y="14.4" width="1.4" height="1.6" fill="#1d1d1d" /><rect x="8.2" y="14.4" width="1.4" height="1.6" fill="#1d1d1d" /><rect x="10.8" y="14.4" width="1.4" height="1.6" fill="#1d1d1d" /><rect x="13.4" y="14.4" width="1.4" height="1.6" fill="#1d1d1d" /></svg><svg x="536.0" y="81.3" width="17.2" height="17.3" viewBox="0 0.0 17.2 17.3" overflow="hidden"><rect width="17.2" height="17.3" fill="#fff"/><rect x="1.6" y="3" width="14" height="11.6" fill="#1d1d1d" /><text x="8.6" y="10.2" font-size="3.8" fill="#bbb" font-weight="bold" text-anchor="middle" font-family="Liberation Mono, monospace">PICA</text><rect x="3.0" y="1.6" width="1.4" height="1.6" fill="#1d1d1d" /><rect x="5.6" y="1.6" width="1.4" height="1.6" fill="#1d1d1d" /><rect x="8.2" y="1.6" width="1.4" height="1.6" fill="#1d1d1d" /><rect x="10.8" y="1.6" width="1.4" height="1.6" fill="#1d1d1d" /><rect x="13.4" y="1.6" width="1.4" height="1.6" fill="#1d1d1d" /><rect x="3.0" y="14.4" width="1.4" height="1.6" fill="#1d1d1d" /><rect x="5.6" y="14.4" width="1.4" height="1.6" fill="#1d1d1d" /><rect x="8.2" y="14.4" width="1.4" height="1.6" fill="#1d1d1d" /><rect x="10.8" y="14.4" width="1.4" height="1.6" fill="#1d1d1d" /><rect x="13.4" y="14.4" width="1.4" height="1.6" fill="#1d1d1d" /></svg><svg x="556.2" y="81.3" width="17.2" height="17.3" viewBox="0 0.0 17.2 17.3" overflow="hidden"><rect width="17.2" height="17.3" fill="#fff"/><rect x="1" y="1" width="15.2" height="15.4" fill="#141414" /><text x="8.6" y="7.6" font-size="6.4" fill="#f0901e" font-weight="bold" text-anchor="middle" font-style="italic">Go</text><text x="8.6" y="14.4" font-size="6.4" fill="#f0901e" font-weight="bold" text-anchor="middle" font-style="italic">Go</text></svg><svg x="576.2" y="81.3" width="17.2" height="17.3" viewBox="0 0.0 17.2 17.3" overflow="hidden"><rect width="17.2" height="17.3" fill="#fff"/><rect x="1.4" y="7" width="14.4" height="3.6" fill="#2f86a6" /><path d="M2.4,8.8 H14.8" stroke="#8fc6d8" stroke-width="0.7" stroke-dasharray="0.9 0.7"/></svg><text x="515.2" y="107.6" font-size="6.2" fill="#555" textLength="22.6" lengthAdjust="spacingAndGlyphs">Computer</text><svg x="515.8" y="111.2" width="17.2" height="17.3" viewBox="0 0.0 17.2 17.3" overflow="hidden"><rect width="17.2" height="17.3" fill="#fff"/><rect x="1.8" y="0.6" width="13.6" height="16" fill="#101010" /><circle cx="6.6" cy="10.2" r="2.3" fill="#c51a4a"/><circle cx="10" cy="10.2" r="2.3" fill="#c51a4a"/><circle cx="8.3" cy="12.6" r="2.1" fill="#c51a4a"/><circle cx="8.3" cy="8.4" r="1.8" fill="#d42b5a"/><path d="M8.3,6.8 Q5.8,3.2 4.4,4.6 Q5.6,6.8 8.3,6.8 Q10.8,3.2 12.2,4.6 Q11,6.8 8.3,6.8" fill="#8db03c"/></svg><svg x="536.0" y="111.2" width="17.2" height="17.3" viewBox="0 0.0 17.2 17.3" overflow="hidden"><rect width="17.2" height="17.3" fill="#fff"/><rect x="0.8" y="0.8" width="15.6" height="15.8" fill="#1c7f9c" /><rect x="1.8" y="2.4" width="14.6" height="5" fill="#f4f8fa" /><text x="3" y="6.9" font-size="5.6" font-weight="bold" fill="#174f63" textLength="12" lengthAdjust="spacingAndGlyphs">YUN</text><g fill="none" stroke="#e8f4f8" stroke-width="1"><ellipse cx="10.6" cy="12.8" rx="2" ry="1.7"/><ellipse cx="14.2" cy="12.8" rx="2" ry="1.7"/></g></svg><svg x="556.2" y="111.2" width="17.2" height="17.3" viewBox="0 0.0 17.2 17.3" overflow="hidden"><rect width="17.2" height="17.3" fill="#fff"/><rect x="0.8" y="0.8" width="15.6" height="15.8" fill="#1c7f9c" /><text x="2" y="8.4" font-size="5.2" fill="#bfe0ea" textLength="13.4" lengthAdjust="spacingAndGlyphs">Galileo</text><g fill="none" stroke="#e8f4f8" stroke-width="1"><ellipse cx="10.6" cy="12.8" rx="2" ry="1.7"/><ellipse cx="14.2" cy="12.8" rx="2" ry="1.7"/></g><text x="4.4" y="14.4" font-size="3" fill="#cfe6ee" font-weight="normal" text-anchor="middle" >intel</text></svg><svg x="576.2" y="111.2" width="17.2" height="17.3" viewBox="0 0.0 17.2 17.3" overflow="hidden"><rect width="17.2" height="17.3" fill="#fff"/><rect x="0.8" y="0.8" width="15.6" height="15.8" fill="#1c7f9c" /><text x="2" y="8.4" font-size="5.2" fill="#bfe0ea" textLength="13.4" lengthAdjust="spacingAndGlyphs">Edison</text><g fill="none" stroke="#e8f4f8" stroke-width="1"><ellipse cx="10.6" cy="12.8" rx="2" ry="1.7"/><ellipse cx="14.2" cy="12.8" rx="2" ry="1.7"/></g><text x="4.4" y="14.4" font-size="3" fill="#cfe6ee" font-weight="normal" text-anchor="middle" >intel</text></svg><svg x="596.3" y="111.2" width="17.2" height="17.3" viewBox="0 0.0 17.2 17.3" overflow="hidden"><rect width="17.2" height="17.3" fill="#fff"/><path d="M8.6,2.4 L10.6,3.6 V6 H12.8 V9.4 H11.4 V12.6 H9.4 V10.4 H7.8 V12.6 H5.8 V9.4 H4.4 V6 H6.6 V3.6 Z" fill="#1a1a1a"/><circle cx="7.8" cy="5" r="0.5" fill="#fff"/><circle cx="9.4" cy="5" r="0.5" fill="#fff"/><text x="8.6" y="15.6" font-size="2.2" fill="#333" font-weight="normal" text-anchor="middle" >Gobbino.org</text></svg><svg x="515.8" y="131.4" width="17.2" height="17.3" viewBox="0 0.0 17.2 17.3" overflow="hidden"><rect width="17.2" height="17.3" fill="#fff"/><circle cx="3.7" cy="7.4" r="1" fill="#e6128c"/><circle cx="4" cy="10.1" r="1.6" fill="#e6128c"/><circle cx="7.6" cy="10.2" r="1.55" fill="#1a1a1a"/><circle cx="11.0" cy="10.2" r="1.55" fill="#1a1a1a"/><circle cx="14.4" cy="10.2" r="1.55" fill="#1a1a1a"/></svg><text x="514.8" y="158" font-size="6.2" fill="#555" textLength="26.6" lengthAdjust="spacingAndGlyphs">Verbindung</text><svg x="515.8" y="161.7" width="17.2" height="17.3" viewBox="0 0.0 17.2 17.3" overflow="hidden"><rect width="17.2" height="17.3" fill="#fff"/><rect x="4.4" y="4.4" width="8.4" height="8.4" fill="#4a4a4a" /><rect x="6.4" y="6.4" width="4.4" height="4.4" fill="#111" /><rect x="0.4" y="0.4" width="16.4" height="16.5" fill="none" stroke="#8a2a3c" stroke-width="0.8"/></svg><svg x="536.0" y="161.7" width="17.2" height="17.3" viewBox="0 0.0 17.2 17.3" overflow="hidden"><rect width="17.2" height="17.3" fill="#fff"/><rect x="1.2" y="5.4" width="14.8" height="6.4" fill="#161616" /><circle cx="3.0" cy="8.6" r="0.45" fill="#777"/><circle cx="5.2" cy="8.6" r="0.45" fill="#777"/><circle cx="7.5" cy="8.6" r="0.45" fill="#777"/><circle cx="9.8" cy="8.6" r="0.45" fill="#777"/><circle cx="12.0" cy="8.6" r="0.45" fill="#777"/><circle cx="14.2" cy="8.6" r="0.45" fill="#777"/></svg><svg x="556.2" y="161.7" width="17.2" height="17.3" viewBox="0 0.0 17.2 17.3" overflow="hidden"><rect width="17.2" height="17.3" fill="#fff"/><rect x="1" y="1.6" width="15.2" height="14" fill="#2a4f96" /><rect x="2.6" y="6.6" width="5" height="5" fill="#9aa7b8" /><rect x="9.6" y="6.6" width="5" height="5" fill="#9aa7b8" /><rect x="3.6" y="8.4" width="3" height="3.2" fill="#333" /><rect x="10.6" y="8.4" width="3" height="3.2" fill="#333" /><circle cx="5" cy="3.8" r="1" fill="#dfe6f2"/><circle cx="12.2" cy="3.8" r="1" fill="#dfe6f2"/></svg><svg x="576.2" y="161.7" width="17.2" height="17.3" viewBox="0 0.0 17.2 17.3" overflow="hidden"><rect width="17.2" height="17.3" fill="#fff"/><rect x="1" y="2.6" width="15.2" height="12.4" fill="#9a9a9a" /><rect x="2.2" y="5" width="11.6" height="7.6" fill="#2f6fc0" rx="2"/><rect x="1" y="2.6" width="15.2" height="2" fill="#7d7d7d" /></svg><svg x="596.3" y="161.7" width="17.2" height="17.3" viewBox="0 0.0 17.2 17.3" overflow="hidden"><rect width="17.2" height="17.3" fill="#fff"/><rect x="2.4" y="4" width="12.6" height="9.6" fill="#9c9c9c" /><rect x="13.4" y="3.4" width="2.4" height="10.8" fill="#3aa05a" /><path d="M4.6,8.8 H10.6 M8.6,7.2 L10.8,8.8 L8.6,10.4" stroke="#666" stroke-width="0.6" fill="none"/></svg><svg x="515.8" y="181.8" width="17.2" height="17.3" viewBox="0 0.0 17.2 17.3" overflow="hidden"><rect width="17.2" height="17.3" fill="#fff"/><rect x="0.8" y="0.8" width="15.6" height="15.8" fill="#4a4a4a" /><circle cx="8.6" cy="8.6" r="6" fill="#2c2c2c" stroke="#666" stroke-width="0.6"/><circle cx="11.8" cy="9.6" r="0.6" fill="#777"/><circle cx="10.4" cy="11.5" r="0.6" fill="#777"/><circle cx="8.6" cy="12.0" r="0.6" fill="#777"/><circle cx="6.8" cy="11.5" r="0.6" fill="#777"/><circle cx="5.4" cy="9.6" r="0.6" fill="#777"/></svg><svg x="536.0" y="181.8" width="17.2" height="17.3" viewBox="0 0.0 17.2 17.3" overflow="hidden"><rect width="17.2" height="17.3" fill="#fff"/><rect x="1.4" y="2" width="14.4" height="9.6" fill="#1c1c1c" /><rect x="3" y="11.6" width="11.2" height="2.6" fill="#3a3a3a" /><rect x="5" y="12.4" width="7" height="1.2" fill="#999" /></svg><svg x="556.2" y="181.8" width="17.2" height="17.3" viewBox="0 0.0 17.2 17.3" overflow="hidden"><rect width="17.2" height="17.3" fill="#fff"/><rect x="2.4" y="3" width="12.4" height="11.6" fill="#6e6e6e" /><rect x="2.4" y="3" width="4" height="8" fill="#8e8e8e" /><rect x="7.4" y="7" width="6.4" height="5.6" fill="#4c4c4c" /><rect x="12.6" y="4" width="1.6" height="9" fill="#3c3c3c" /></svg><svg x="576.2" y="181.8" width="17.2" height="17.3" viewBox="0 0.0 17.2 17.3" overflow="hidden"><rect width="17.2" height="17.3" fill="#fff"/><path d="M8.6,1 L16,5.4 V16 H1.2 V5.4 Z" fill="#1f8fa8"/><text x="8.6" y="13" font-size="5.4" fill="#fff" font-weight="bold" text-anchor="middle" font-family="Liberation Serif, serif">XBee</text></svg><svg x="596.3" y="181.8" width="17.2" height="17.3" viewBox="0 0.0 17.2 17.3" overflow="hidden"><rect width="17.2" height="17.3" fill="#fff"/><rect x="1.4" y="3.6" width="14.4" height="10.4" fill="#1f8fa8" /><rect x="3" y="5.6" width="5.4" height="4" fill="#16728a" /><circle cx="12" cy="8" r="1.6" fill="#cde7ee"/><rect x="4" y="11.4" width="8" height="1" fill="#cde7ee" /></svg><svg x="515.8" y="201.6" width="17.2" height="17.3" viewBox="0 0.0 17.2 17.3" overflow="hidden"><rect width="17.2" height="17.3" fill="#fff"/><rect x="1.6" y="1.6" width="14" height="14.4" fill="#4a78b0" /><rect x="3" y="3.4" width="11.2" height="11" fill="#5b6068" /><rect x="1.6" y="1.6" width="14" height="1.2" fill="#2f5a96" /></svg><svg x="536.0" y="201.6" width="17.2" height="17.3" viewBox="0 0.0 17.2 17.3" overflow="hidden"><rect width="17.2" height="17.3" fill="#fff"/><rect x="1.4" y="4" width="14.4" height="9.4" fill="#1f8fa8" /><rect x="3.6" y="6" width="8.4" height="5" fill="#2a7190" /><rect x="12.6" y="5" width="2" height="2" fill="#cde7ee" /></svg><svg x="556.2" y="201.6" width="17.2" height="17.3" viewBox="0 0.0 17.2 17.3" overflow="hidden"><rect width="17.2" height="17.3" fill="#fff"/><rect x="2.4" y="1.2" width="12.4" height="15" fill="#1f8fa8" /><rect x="4" y="3.4" width="9.2" height="9.6" fill="#2c9ab2" /></svg><svg x="576.2" y="201.6" width="17.2" height="17.3" viewBox="0 0.0 17.2 17.3" overflow="hidden"><rect width="17.2" height="17.3" fill="#fff"/><rect x="1.4" y="7" width="14.4" height="3.8" fill="#2a8aa6" /></svg><text x="515.4" y="228.2" font-size="6.2" fill="#555" textLength="47.8" lengthAdjust="spacingAndGlyphs">Steckplatinenansicht</text><svg x="515.8" y="231.7" width="17.2" height="17.3" viewBox="0 0.0 17.2 17.3" overflow="hidden"><rect width="17.2" height="17.3" fill="#fff"/><rect x="1" y="1" width="15.2" height="15.4" fill="#e9e9e9" /><circle cx="10.0" cy="2.8" r="0.55" fill="#444"/><circle cx="12.2" cy="2.8" r="0.55" fill="#444"/><circle cx="14.4" cy="2.8" r="0.55" fill="#444"/><circle cx="10.0" cy="5.0" r="0.55" fill="#444"/><circle cx="12.2" cy="5.0" r="0.55" fill="#444"/><circle cx="14.4" cy="5.0" r="0.55" fill="#444"/><circle cx="2.6" cy="12.4" r="0.55" fill="#444"/><circle cx="4.7" cy="12.4" r="0.55" fill="#444"/><circle cx="6.8" cy="12.4" r="0.55" fill="#444"/><circle cx="8.9" cy="12.4" r="0.55" fill="#444"/><circle cx="11.0" cy="12.4" r="0.55" fill="#444"/><circle cx="13.1" cy="12.4" r="0.55" fill="#444"/><circle cx="15.2" cy="12.4" r="0.55" fill="#444"/><circle cx="2.6" cy="14.6" r="0.55" fill="#444"/><circle cx="4.7" cy="14.6" r="0.55" fill="#444"/><circle cx="6.8" cy="14.6" r="0.55" fill="#444"/><circle cx="8.9" cy="14.6" r="0.55" fill="#444"/><circle cx="11.0" cy="14.6" r="0.55" fill="#444"/><circle cx="13.1" cy="14.6" r="0.55" fill="#444"/><circle cx="15.2" cy="14.6" r="0.55" fill="#444"/></svg><svg x="536.0" y="231.7" width="17.2" height="17.3" viewBox="0 0.0 17.2 17.3" overflow="hidden"><rect width="17.2" height="17.3" fill="#fff"/><rect x="0.8" y="0.8" width="15.6" height="15.8" fill="#d9b06a" /><path d="M1,2.0 H16.2" stroke="#e6c58a" stroke-width="0.5" stroke-dasharray="0.7 0.9"/><path d="M1,3.6 H16.2" stroke="#e6c58a" stroke-width="0.5" stroke-dasharray="0.7 0.9"/><path d="M1,5.2 H16.2" stroke="#e6c58a" stroke-width="0.5" stroke-dasharray="0.7 0.9"/><path d="M1,6.8 H16.2" stroke="#e6c58a" stroke-width="0.5" stroke-dasharray="0.7 0.9"/><path d="M1,8.4 H16.2" stroke="#e6c58a" stroke-width="0.5" stroke-dasharray="0.7 0.9"/><path d="M1,10.0 H16.2" stroke="#e6c58a" stroke-width="0.5" stroke-dasharray="0.7 0.9"/><path d="M1,11.6 H16.2" stroke="#e6c58a" stroke-width="0.5" stroke-dasharray="0.7 0.9"/><path d="M1,13.2 H16.2" stroke="#e6c58a" stroke-width="0.5" stroke-dasharray="0.7 0.9"/><path d="M1,14.8 H16.2" stroke="#e6c58a" stroke-width="0.5" stroke-dasharray="0.7 0.9"/></svg><svg x="556.2" y="231.7" width="17.2" height="17.3" viewBox="0 0.0 17.2 17.3" overflow="hidden"><rect width="17.2" height="17.3" fill="#fff"/><rect x="0.8" y="0.8" width="15.6" height="15.8" fill="#d5a85e" /><circle cx="3.0" cy="3.0" r="0.8" fill="#8a6228"/><circle cx="5.8" cy="3.0" r="0.8" fill="#8a6228"/><circle cx="8.6" cy="3.0" r="0.8" fill="#8a6228"/><circle cx="11.4" cy="3.0" r="0.8" fill="#8a6228"/><circle cx="14.2" cy="3.0" r="0.8" fill="#8a6228"/><circle cx="3.0" cy="5.8" r="0.8" fill="#8a6228"/><circle cx="5.8" cy="5.8" r="0.8" fill="#8a6228"/><circle cx="8.6" cy="5.8" r="0.8" fill="#8a6228"/><circle cx="11.4" cy="5.8" r="0.8" fill="#8a6228"/><circle cx="14.2" cy="5.8" r="0.8" fill="#8a6228"/><circle cx="3.0" cy="8.6" r="0.8" fill="#8a6228"/><circle cx="5.8" cy="8.6" r="0.8" fill="#8a6228"/><circle cx="8.6" cy="8.6" r="0.8" fill="#8a6228"/><circle cx="11.4" cy="8.6" r="0.8" fill="#8a6228"/><circle cx="14.2" cy="8.6" r="0.8" fill="#8a6228"/><circle cx="3.0" cy="11.4" r="0.8" fill="#8a6228"/><circle cx="5.8" cy="11.4" r="0.8" fill="#8a6228"/><circle cx="8.6" cy="11.4" r="0.8" fill="#8a6228"/><circle cx="11.4" cy="11.4" r="0.8" fill="#8a6228"/><circle cx="14.2" cy="11.4" r="0.8" fill="#8a6228"/><circle cx="3.0" cy="14.2" r="0.8" fill="#8a6228"/><circle cx="5.8" cy="14.2" r="0.8" fill="#8a6228"/><circle cx="8.6" cy="14.2" r="0.8" fill="#8a6228"/><circle cx="11.4" cy="14.2" r="0.8" fill="#8a6228"/><circle cx="14.2" cy="14.2" r="0.8" fill="#8a6228"/></svg><svg x="576.2" y="231.7" width="17.2" height="17.3" viewBox="0 0.0 17.2 17.3" overflow="hidden"><rect width="17.2" height="17.3" fill="#fff"/><rect x="1" y="1" width="15.2" height="15.4" fill="#f2f2f2" /><circle cx="2.6" cy="3.0" r="0.4" fill="#777"/><circle cx="5.0" cy="3.0" r="0.4" fill="#777"/><circle cx="7.4" cy="3.0" r="0.4" fill="#777"/><circle cx="9.8" cy="3.0" r="0.4" fill="#777"/><circle cx="12.2" cy="3.0" r="0.4" fill="#777"/><circle cx="14.6" cy="3.0" r="0.4" fill="#777"/><circle cx="2.6" cy="5.4" r="0.4" fill="#777"/><circle cx="5.0" cy="5.4" r="0.4" fill="#777"/><circle cx="7.4" cy="5.4" r="0.4" fill="#777"/><circle cx="9.8" cy="5.4" r="0.4" fill="#777"/><circle cx="12.2" cy="5.4" r="0.4" fill="#777"/><circle cx="14.6" cy="5.4" r="0.4" fill="#777"/><circle cx="2.6" cy="7.8" r="0.4" fill="#777"/><circle cx="5.0" cy="7.8" r="0.4" fill="#777"/><circle cx="7.4" cy="7.8" r="0.4" fill="#777"/><circle cx="9.8" cy="7.8" r="0.4" fill="#777"/><circle cx="12.2" cy="7.8" r="0.4" fill="#777"/><circle cx="14.6" cy="7.8" r="0.4" fill="#777"/><circle cx="2.6" cy="10.2" r="0.4" fill="#777"/><circle cx="5.0" cy="10.2" r="0.4" fill="#777"/><circle cx="7.4" cy="10.2" r="0.4" fill="#777"/><circle cx="9.8" cy="10.2" r="0.4" fill="#777"/><circle cx="12.2" cy="10.2" r="0.4" fill="#777"/><circle cx="14.6" cy="10.2" r="0.4" fill="#777"/><circle cx="2.6" cy="12.6" r="0.4" fill="#777"/><circle cx="5.0" cy="12.6" r="0.4" fill="#777"/><circle cx="7.4" cy="12.6" r="0.4" fill="#777"/><circle cx="9.8" cy="12.6" r="0.4" fill="#777"/><circle cx="12.2" cy="12.6" r="0.4" fill="#777"/><circle cx="14.6" cy="12.6" r="0.4" fill="#777"/><circle cx="2.6" cy="15.0" r="0.4" fill="#777"/><circle cx="5.0" cy="15.0" r="0.4" fill="#777"/><circle cx="7.4" cy="15.0" r="0.4" fill="#777"/><circle cx="9.8" cy="15.0" r="0.4" fill="#777"/><circle cx="12.2" cy="15.0" r="0.4" fill="#777"/><circle cx="14.6" cy="15.0" r="0.4" fill="#777"/><path d="M5,3 Q8,4 8,8 Q8,12 12,14" fill="none" stroke="#3d6fb8" stroke-width="2"/></svg><svg x="596.3" y="231.7" width="17.2" height="17.3" viewBox="0 0.0 17.2 17.3" overflow="hidden"><rect width="17.2" height="17.3" fill="#fff"/><text x="8.8" y="8" font-size="4.8" fill="#555" font-weight="normal" text-anchor="middle" font-family="Liberation Mono, monospace" letter-spacing="0.5">text</text></svg><svg x="515.8" y="252.0" width="17.2" height="17.3" viewBox="0 0.0 17.2 17.3" overflow="hidden"><rect width="17.2" height="17.3" fill="#fff"/><rect x="2" y="3" width="8.6" height="8.4" fill="#858585" /><text x="6.6" y="10.2" font-size="7" fill="#fff" font-weight="bold" text-anchor="middle" >f</text></svg><rect x="617.4" y="174.2" width="4.4" height="61.6" fill="#bcbcbc" rx="1.6"/><rect x="497.5" y="277.1" width="127.5" height="1.6" fill="#555" /><text x="499.8" y="286.2" font-size="6.6" fill="#5e5e5e" textLength="29.4" lengthAdjust="spacingAndGlyphs">Inspektor</text><g fill="none" stroke="#666" stroke-width="0.8"><rect x="610.4" y="282.6" width="3.2" height="2.6"/><path d="M611.8,282.4 V281.2 H615 V283.8 H613.8"/><path d="M617.8,281.2 L621.4,284.8 M621.4,281.2 L617.8,284.8" stroke-width="0.9"/></g><rect x="499.4" y="290.8" width="122.0" height="9.4" fill="#d3d3d3" /><rect x="499.8" y="303.5" width="17.2" height="17.2" fill="#fff" /><rect x="520.0" y="303.5" width="17.2" height="17.2" fill="#fff" /><rect x="540.6" y="303.5" width="17.2" height="17.2" fill="#fff" /><rect x="499.4" y="329.6" width="122.0" height="0.6" fill="#b5b5b5" /></svg>
</body></html>
